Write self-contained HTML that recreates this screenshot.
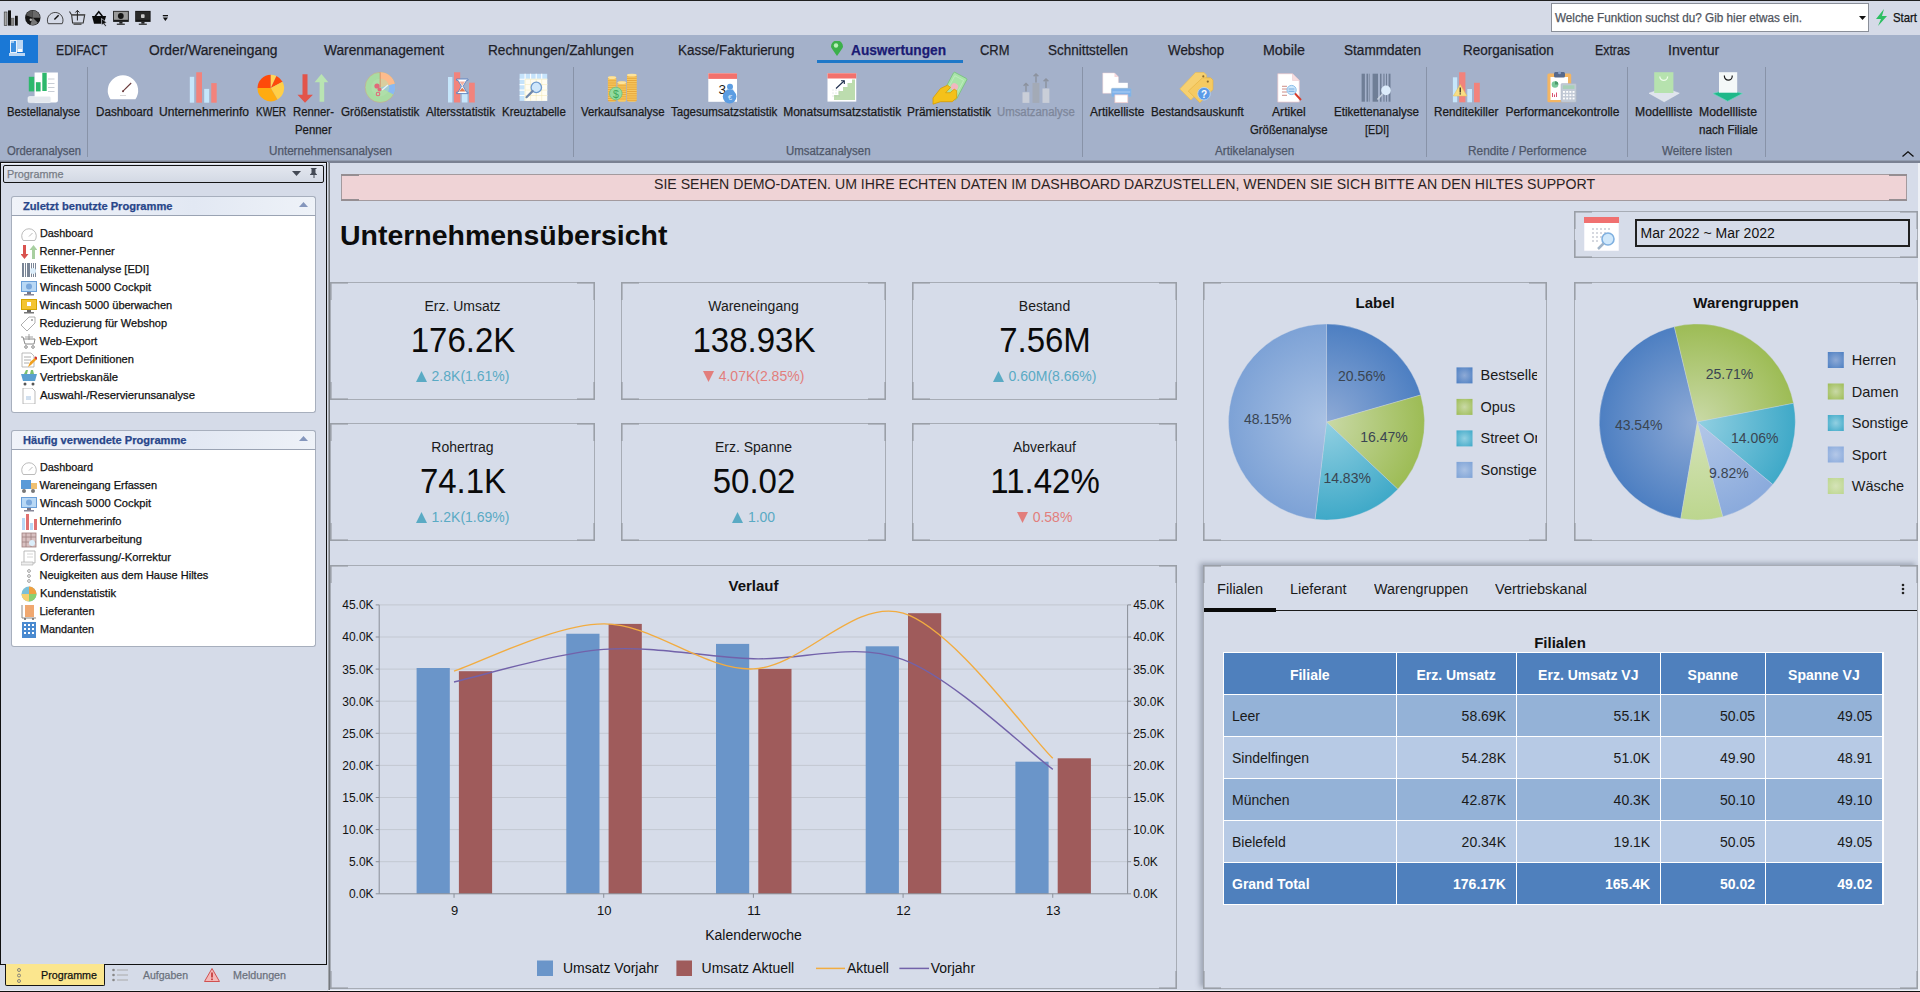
<!DOCTYPE html>
<html><head><meta charset="utf-8"><title>Dashboard</title>
<style>
html,body{margin:0;padding:0}
body{width:1920px;height:992px;position:relative;overflow:hidden;background:#d6dce9;font-family:'Liberation Sans',sans-serif}
.a{position:absolute;display:block}
.t{position:absolute;white-space:pre;display:block}
</style></head><body>
<div class="a" style="left:0px;top:0px;width:1920px;height:35px;background:#d5dae7"></div><div class="a" style="left:0px;top:0px;width:1920px;height:1px;background:#202020"></div><svg class="a" style="left:0;top:0" width="180" height="35" viewBox="0 0 180 35"><rect x="4.2" y="12" width="2.8" height="13.6" fill="#a8a8a8" stroke="#333" stroke-width=".6"/><rect x="8" y="10.4" width="3" height="15.2" fill="#111"/><rect x="11" y="18.1" width="3" height="7.5" fill="#888" stroke="#444" stroke-width=".4"/><rect x="15" y="15.8" width="2.8" height="9.8" fill="#111"/><circle cx="32.8" cy="17.7" r="7.7" fill="#141414"/><path d="M32.8 17.7L32.80 10.50A7.2 7.2 0 0 1 40.00 17.70z" fill="#6a6a6a"/><path d="M32.8 17.7L37.89 22.79A7.2 7.2 0 0 1 30.34 24.47z" fill="#777"/><path d="M32.8 17.7L26.03 15.24A7.2 7.2 0 0 1 32.80 10.50z" fill="#555"/><circle cx="30.8" cy="19.8" r="1.2" fill="#bbb"/><path d="M48.2 23.7A7.8 7.8 0 1 1 62.2 23.7z" fill="none" stroke="#333" stroke-width=".9"/><path d="M54.4 19.5L58.6 15.3" stroke="#111" stroke-width="1.4"/><path d="M69.5 11.5l2 3.2h13.2l-1.5 8.3H72.6l-1-8.3" fill="none" stroke="#333" stroke-width="1.1"/><path d="M71.6 14.9h13" stroke="#555" stroke-width="1.6"/><path d="M77.4 20.5V10.4M75.4 12.5l2-2.1 2 2.1" fill="none" stroke="#222" stroke-width="1"/><path d="M73.5 24.2h8" stroke="#444" stroke-width="1.3"/><path d="M92 16h14.1l-2.2 7.7H94z" fill="#0a0a0a"/><path d="M95.2 16.2l3.6-4.4 3.6 4.4" fill="none" stroke="#0a0a0a" stroke-width="1.5"/><path d="M101.5 18.5l5.5 4.3-2.3.4 1.7 2.6-1.3.7-1.6-2.6-1.8 1.4z" fill="#0a0a0a" stroke="#d5dae7" stroke-width=".7"/><rect x="113.1" y="10.9" width="15.7" height="11" fill="#1a1a1a"/><rect x="114" y="11.7" width="13.9" height="8.1" fill="#9a9a9a"/><circle cx="120.8" cy="16" r="2.9" fill="#151515"/><rect x="119.3" y="21.9" width="3.2" height="1.8" fill="#222"/><rect x="116.8" y="23.6" width="8" height="1.3" fill="#333"/><rect x="135.2" y="10.9" width="15.4" height="11" fill="#151515"/><rect x="136" y="11.7" width="13.8" height="8.1" fill="#2a2a2a"/><rect x="141" y="14.3" width="3.6" height="3.7" rx=".8" fill="#c8c8c8"/><rect x="141.3" y="21.9" width="3.2" height="1.8" fill="#222"/><rect x="138.8" y="23.6" width="8" height="1.3" fill="#333"/><rect x="162.8" y="15" width="5.2" height="1.3" fill="#111"/><path d="M162.8 17.4h5.2l-2.6 3.6z" fill="#111"/></svg><div class="a" style="left:1551px;top:3px;width:318px;height:29px;background:#fff;border:1px solid #8a8f99;box-sizing:border-box"></div><svg class="a" style="left:1859px;top:16px;" width="7" height="4" viewBox="0 0 7 4"><path d="M0 0h7L3.5 4z" fill="#111"/></svg><svg class="a" style="left:1875px;top:9px;" width="14" height="17" viewBox="0 0 14 17"><path d="M9 0L1 10h5l-3 7 9-10H7z" fill="#2dbf62"/></svg><div class="a" style="left:0px;top:35px;width:1920px;height:126px;background:#a4b1ca"></div><div class="a" style="left:0px;top:35px;width:38px;height:28px;background:#1a78d6"></div><svg class="a" style="left:9px;top:40px;" width="17" height="17" viewBox="0 0 17 17"><rect x="1" y="0" width="7" height="13" fill="#eaf2fb"/><rect x="2" y="1" width="5" height="11" fill="#3a8ee0"/><rect x="2" y="1.5" width="3" height="1" fill="#fff"/><rect x="8" y="0" width="6" height="12" fill="#bcd7f3"/><rect x="9" y="9" width="4" height="3" fill="#fff"/><rect x="0" y="13" width="16" height="3" fill="#bcd7f3"/></svg><svg class="a" style="left:831px;top:41px;" width="12" height="15" viewBox="0 0 12 15"><path d="M6 15C2 9 0 7 0 5.5a6 6 0 0 1 12 0C12 7 10 9 6 15z" fill="#3cb04a"/><circle cx="5" cy="4.5" r="2.2" fill="#b8f0b8"/></svg><div class="a" style="left:817px;top:60px;width:146px;height:3px;background:#1e78c8"></div><div class="a" style="left:0px;top:160px;width:1920px;height:1px;background:#939db0"></div><div class="a" style="left:0px;top:161px;width:1920px;height:2px;background:#7a8192"></div><div class="a" style="left:87px;top:67px;width:1px;height:90px;background:#8893a8"></div><div class="a" style="left:573px;top:67px;width:1px;height:90px;background:#8893a8"></div><div class="a" style="left:1082px;top:67px;width:1px;height:90px;background:#8893a8"></div><div class="a" style="left:1426px;top:67px;width:1px;height:90px;background:#8893a8"></div><div class="a" style="left:1627px;top:67px;width:1px;height:90px;background:#8893a8"></div><div class="a" style="left:1765px;top:67px;width:1px;height:90px;background:#8893a8"></div><svg class="a" style="left:0;top:63px" width="1920" height="100" viewBox="0 63 1920 100"><path d="M34.6 72.4H57.9V100.5Q57.9 102.6 55.8 102.6H34.6z" fill="#fff"/><path d="M48 79h6.5M48 83.5h6.5M48 87.5h6.5M48 91.5h6.5" stroke="#c9ced6" stroke-width="1"/><rect x="28" y="96.5" width="22.8" height="6.1" rx="1.5" fill="#e4e8ee" stroke="#f4f6f8" stroke-width=".6"/><rect x="28.8" y="76.8" width="5.40" height="14.60" fill="#2db86c"/><rect x="35.9" y="82.2" width="4.70" height="9.20" fill="#2db86c"/><rect x="42.3" y="72.8" width="4.40" height="18.20" fill="#2db86c"/><path d="M110.5 99.2A15.2 15.2 0 1 1 135.4 99.2z" fill="#fff"/><path d="M123 91.2L131.2 83" stroke="#6a3a3a" stroke-width="1.1"/><circle cx="123" cy="91.2" r="1" fill="#6a3a3a"/><rect x="120" y="95" width="6" height="1" fill="#d8d8d8"/><rect x="189.8" y="76.8" width="4.40" height="25.90" fill="#c6e6fb"/><rect x="196.25" y="72.25" width="5.75" height="30.45" fill="#f2837c"/><rect x="204.2" y="88.9" width="5.00" height="13.80" fill="#c6e6fb"/><rect x="211.25" y="83.1" width="5.45" height="19.60" fill="#f2837c"/><path d="M270.8 88.1L257.50 88.10A13.3 13.3 0 0 1 270.80 74.80z" fill="#fe4a0a"/><path d="M270.8 88.1L270.80 74.80A13.3 13.3 0 0 1 276.42 76.05z" fill="#ffd45a"/><path d="M270.8 88.1L276.42 76.05A13.3 13.3 0 0 1 282.54 81.86z" fill="#fe4a0a"/><path d="M270.8 88.1L282.54 81.86A13.3 13.3 0 0 1 277.45 99.62z" fill="#ffcf48"/><path d="M270.8 88.1L277.45 99.62A13.3 13.3 0 0 1 257.50 88.10z" fill="#ffab10"/><path d="M302.5 74.3h5v20.45h5.4l-7.9 7.95-7.5-7.95h5z" fill="#e2544a"/><path d="M319.6 101.8h4.6V82.25h4.1l-6.85-8.35-6.85 8.35h5z" fill="#b9e4b2"/><circle cx="380.2" cy="87.4" r="15.1" fill="#a9dca2" stroke="#d0a080" stroke-width=".5"/><path d="M380.2 87.4L380.20 72.30A15.1 15.1 0 0 1 394.85 83.75z" fill="#fdbb8c"/><path d="M380.2 87.4L394.85 83.75A15.1 15.1 0 0 1 393.53 94.49z" fill="#8ab8f2"/><circle cx="380.2" cy="87.4" r="9" fill="#b6e2b0" opacity=".5"/><path d="M380.2 72.3v15.1" stroke="#d88860" stroke-width=".8"/><circle cx="377" cy="86" r="2.6" fill="#e06a7a"/><circle cx="379.5" cy="89.5" r="2" fill="#e06a7a"/><circle cx="378" cy="94" r="1.8" fill="none" stroke="#e06a7a" stroke-width="1.1"/><path d="M382 90l6-5" stroke="#e8eef8" stroke-width="1.4"/><rect x="448" y="77" width="4.40" height="25.50" fill="#c6e6fb"/><rect x="454" y="72.25" width="6.20" height="30.25" fill="#f2837c"/><rect x="461.8" y="93.6" width="5.70" height="8.90" fill="#c6e6fb"/><rect x="469" y="82.7" width="5.80" height="19.80" fill="#f2837c"/><path d="M456.6 79h11.4v1.4h-1.4l-3.5 5.9 3.5 5.9h1.4v1.4h-11.4v-1.4h1.4l3.5-5.9-3.5-5.9h-1.4z" fill="#fff" stroke="#5a80c0" stroke-width=".9"/><path d="M459.5 81.5h5.6l-2.8 4.2z" fill="#f2b0a0"/><path d="M459 91.5h6.6l-3.3-3.8z" fill="#e07a50"/><rect x="519.6" y="73.8" width="27.6" height="27.1" fill="#c5e3fb"/><rect x="525" y="79.3" width="22.2" height="21.6" fill="#fffdf2"/><path d="M525.1 73.8V100.9M519.6 79.2H547.2" stroke="#ffffff" stroke-width="1.1"/><path d="M530.6 73.8V100.9M519.6 84.6H547.2" stroke="#ffffff" stroke-width="1.1"/><path d="M536.2 73.8V100.9M519.6 90.1H547.2" stroke="#ffffff" stroke-width="1.1"/><path d="M541.7 73.8V100.9M519.6 95.5H547.2" stroke="#ffffff" stroke-width="1.1"/><path d="M525.1 79.3V100.9M525 79.2H547.2" stroke="#f4e7b0" stroke-width=".6"/><path d="M530.6 79.3V100.9M525 84.6H547.2" stroke="#f4e7b0" stroke-width=".6"/><path d="M536.2 79.3V100.9M525 90.1H547.2" stroke="#f4e7b0" stroke-width=".6"/><path d="M541.7 79.3V100.9M525 95.5H547.2" stroke="#f4e7b0" stroke-width=".6"/><circle cx="536.3" cy="87.4" r="5.2" fill="#cfe7fb" stroke="#6f9cd0" stroke-width="1.3"/><path d="M532.6 91.1L526.5 97.2" stroke="#7088aa" stroke-width="2.2" stroke-linecap="round"/><rect x="607.9" y="76.4" width="8.35" height="25.40" rx="2" fill="#f8c860"/><path d="M607.9 78.6H616.25" stroke="#e09a2c" stroke-width=".7"/><path d="M607.9 80.8H616.25" stroke="#e09a2c" stroke-width=".7"/><path d="M607.9 83.0H616.25" stroke="#e09a2c" stroke-width=".7"/><path d="M607.9 85.2H616.25" stroke="#e09a2c" stroke-width=".7"/><path d="M607.9 87.4H616.25" stroke="#e09a2c" stroke-width=".7"/><path d="M607.9 89.6H616.25" stroke="#e09a2c" stroke-width=".7"/><path d="M607.9 91.8H616.25" stroke="#e09a2c" stroke-width=".7"/><path d="M607.9 94.0H616.25" stroke="#e09a2c" stroke-width=".7"/><path d="M607.9 96.2H616.25" stroke="#e09a2c" stroke-width=".7"/><path d="M607.9 98.4H616.25" stroke="#e09a2c" stroke-width=".7"/><path d="M607.9 100.6H616.25" stroke="#e09a2c" stroke-width=".7"/><ellipse cx="612.08" cy="77.70" rx="4.18" ry="1.4" fill="#fde39a"/><rect x="617.5" y="81.4" width="8.75" height="20.40" rx="2" fill="#f8c860"/><path d="M617.5 83.6H626.25" stroke="#e09a2c" stroke-width=".7"/><path d="M617.5 85.8H626.25" stroke="#e09a2c" stroke-width=".7"/><path d="M617.5 88.0H626.25" stroke="#e09a2c" stroke-width=".7"/><path d="M617.5 90.2H626.25" stroke="#e09a2c" stroke-width=".7"/><path d="M617.5 92.4H626.25" stroke="#e09a2c" stroke-width=".7"/><path d="M617.5 94.6H626.25" stroke="#e09a2c" stroke-width=".7"/><path d="M617.5 96.8H626.25" stroke="#e09a2c" stroke-width=".7"/><path d="M617.5 99.0H626.25" stroke="#e09a2c" stroke-width=".7"/><ellipse cx="621.88" cy="82.70" rx="4.38" ry="1.4" fill="#fde39a"/><rect x="627" y="73.9" width="9.70" height="27.90" rx="2" fill="#f8c860"/><path d="M627 76.1H636.7" stroke="#e09a2c" stroke-width=".7"/><path d="M627 78.3H636.7" stroke="#e09a2c" stroke-width=".7"/><path d="M627 80.5H636.7" stroke="#e09a2c" stroke-width=".7"/><path d="M627 82.7H636.7" stroke="#e09a2c" stroke-width=".7"/><path d="M627 84.9H636.7" stroke="#e09a2c" stroke-width=".7"/><path d="M627 87.1H636.7" stroke="#e09a2c" stroke-width=".7"/><path d="M627 89.3H636.7" stroke="#e09a2c" stroke-width=".7"/><path d="M627 91.5H636.7" stroke="#e09a2c" stroke-width=".7"/><path d="M627 93.7H636.7" stroke="#e09a2c" stroke-width=".7"/><path d="M627 95.9H636.7" stroke="#e09a2c" stroke-width=".7"/><path d="M627 98.1H636.7" stroke="#e09a2c" stroke-width=".7"/><path d="M627 100.3H636.7" stroke="#e09a2c" stroke-width=".7"/><ellipse cx="631.85" cy="75.20" rx="4.85" ry="1.4" fill="#fde39a"/><circle cx="615.8" cy="93.5" r="6.3" fill="#93dca0" stroke="#6cc080" stroke-width=".8"/><text x="615.8" y="97.6" font-size="10.5" text-anchor="middle" fill="#3ea85a" font-family="Liberation Sans">$</text><rect x="708.3" y="73.3" width="28.7" height="28.5" fill="#fff"/><rect x="708.3" y="73.3" width="28.7" height="5.6" fill="#f2716c"/><text x="722.2" y="94.3" font-size="13.5" text-anchor="middle" fill="#1a1a1a" font-family="Liberation Sans">3</text><circle cx="729.6" cy="96.6" r="6.8" fill="#5c9de2"/><circle cx="730" cy="86.8" r="3" fill="#5c9de2"/><path d="M727 89.5h6l1.2 2.5h-8.4z" fill="#5c9de2"/><text x="730" y="99.6" font-size="7.5" text-anchor="middle" fill="#d8e8fa" font-family="Liberation Sans">€</text><rect x="827.5" y="73.25" width="28.75" height="28.35" fill="#fff"/><rect x="827.5" y="73.25" width="28.75" height="5.25" fill="#f2716c"/><path d="M834 100V95h4.5v-4h4.5v-4h4.5v-4h4.5v-3.5h3v20.5z" fill="#bcdcae"/><circle cx="833" cy="90" r=".45" fill="#9aa"/><circle cx="833" cy="93" r=".45" fill="#9aa"/><circle cx="833" cy="96" r=".45" fill="#9aa"/><circle cx="836" cy="90" r=".45" fill="#9aa"/><circle cx="836" cy="93" r=".45" fill="#9aa"/><circle cx="836" cy="96" r=".45" fill="#9aa"/><circle cx="839" cy="90" r=".45" fill="#9aa"/><circle cx="839" cy="93" r=".45" fill="#9aa"/><circle cx="839" cy="96" r=".45" fill="#9aa"/><path d="M836 88.5L844 81" stroke="#1c2c4c" stroke-width="1.1"/><path d="M841 80.8h3.3v3.3" fill="none" stroke="#1c2c4c" stroke-width="1.1"/><g transform="rotate(28 955 86)"><rect x="947.5" y="74" width="15" height="24" rx="1" fill="#a8e4a8" stroke="#78c080" stroke-width=".8"/><circle cx="955" cy="87" r="3.6" fill="#f0b8c0"/><rect x="950" y="77" width="10" height="18" fill="none" stroke="#c8f0c8" stroke-width=".6"/></g><path d="M933 98l7.5-9.5 7-3.3 3 2.2-4.8 5.3h4.5l4-3.5 2.5 1.5v7.2l-4.5 3.8H940.5l-7.5 2.5z" fill="#f4c11a" stroke="#d89c00" stroke-width=".8"/><rect x="1022.5" y="92.25" width="6.90" height="10.65" fill="#c9ced8"/><rect x="1032.5" y="82.9" width="6.90" height="20.00" fill="#a3aab6"/><rect x="1042.5" y="88.5" width="6.90" height="14.40" fill="#c9ced8"/><g stroke="#8c929e" stroke-width="1.4" fill="none"><path d="M1026 91.5V83.5M1023.6 85.8l2.4-2.4 2.4 2.4M1036 82.5V74M1033.6 76.3l2.4-2.4 2.4 2.4M1046 88V79M1043.6 81.3l2.4-2.4 2.4 2.4"/></g><path d="M1102.8 73H1114.5L1118.4 76.9V93.3H1102.8z" fill="#fff" stroke="#f0d0d4" stroke-width=".5"/><path d="M1114.5 73v3.9h3.9" fill="#f6d6da"/><rect x="1114.9" y="82.8" width="12.9" height="6" fill="#fff"/><rect x="1111.4" y="88.3" width="19.9" height="8.6" rx="1.2" fill="#7fb2ea" stroke="#9cb8d0" stroke-width=".6"/><rect x="1112.5" y="91.4" width="17.7" height="1.2" fill="#a6caf2"/><rect x="1114.9" y="94.9" width="12.9" height="7.8" fill="#fff" stroke="#f0c8c8" stroke-width=".7"/><path d="M1198 72.8h8.5l2.5 2.5v9.2l-15.7 15.7-11-11z" fill="#f6d070" stroke="#e9bc50" stroke-width=".6" transform="translate(-2.5 -0.3)"/><path d="M1202.5 77.8h8.3l2.2 2.2v9.6l-13.1 13.1-11.6-11.6z" fill="#f5ca62" stroke="#e2b040" stroke-width=".6"/><circle cx="1203.3" cy="76.3" r="1.1" fill="#8a6a30"/><circle cx="1207.8" cy="81.6" r="1.1" fill="#8a6a30"/><circle cx="1204" cy="93.7" r="6.3" fill="#5b9be8" stroke="#b8d4f4" stroke-width=".9"/><text x="1204" y="97.5" font-size="10" text-anchor="middle" fill="#fff" font-weight="bold" font-family="Liberation Sans">?</text><path d="M1277.8 73.7H1292.5L1299.3 80.5V102.1H1277.8z" fill="#fff" stroke="#e8c4c8" stroke-width=".7"/><path d="M1292.5 73.7v6.8h6.8" fill="#f7dde0" stroke="#e8c4c8" stroke-width=".5"/><path d="M1282 86.3h5M1282 89h5M1282 92h5M1282 95.3h5" stroke="#c07068" stroke-width=".8"/><circle cx="1291.6" cy="90" r="4.6" fill="#cfe8fb" stroke="#7fb8e8" stroke-width=".9"/><path d="M1288.5 89h6M1288.5 91.3h6" stroke="#5a9ad8" stroke-width=".8"/><path d="M1295 93.5L1301 100" stroke="#d83a2a" stroke-width="1.9"/><rect x="1361.6" y="73.7" width="3.30" height="28.00" fill="#6f7e96"/><rect x="1366.5" y="73.7" width="1.70" height="28.00" fill="#6f7e96"/><rect x="1369.2" y="73.7" width="0.80" height="28.00" fill="#7f8da2"/><rect x="1372.6" y="73.7" width="5.40" height="28.00" fill="#6f7e96"/><rect x="1380" y="73.7" width="1.50" height="28.00" fill="#6f7e96"/><rect x="1383.4" y="73.7" width="1.10" height="28.00" fill="#6f7e96"/><rect x="1386" y="73.7" width="1.00" height="28.00" fill="#6f7e96"/><rect x="1388.6" y="73.7" width="1.90" height="28.00" fill="#6f7e96"/><path d="M1382.5 94L1377.5 99.5" stroke="#c8d2de" stroke-width="1.6"/><circle cx="1386" cy="90.4" r="4.8" fill="#dcecfb"/><rect x="1452.9" y="77.3" width="4.30" height="25.00" fill="#c6e6fb"/><rect x="1459.1" y="72.25" width="6.30" height="30.05" fill="#f2837c"/><rect x="1467.3" y="89" width="4.70" height="13.30" fill="#c6e6fb"/><rect x="1474" y="82.8" width="5.80" height="19.50" fill="#f2837c"/><path d="M1460.2 84.4L1467 96H1453.3z" fill="#f8de84" stroke="#e8c050" stroke-width=".5"/><rect x="1459.6" y="87.5" width="1.2" height="5" fill="#222"/><rect x="1459.6" y="93.3" width="1.2" height="1.2" fill="#222"/><rect x="1547.4" y="73.5" width="23.8" height="28.8" rx="1.5" fill="#f3b563"/><rect x="1550.5" y="77" width="17.5" height="23" fill="#fff"/><rect x="1554" y="72" width="11" height="5.5" rx="1.5" fill="#56698c"/><circle cx="1559.5" cy="72.8" r="1.5" fill="#8aa0c8"/><circle cx="1555" cy="84.5" r="3.3" fill="#7ac89a"/><path d="M1555 84.5V81.2A3.3 3.3 0 0 1 1558.3 84.5z" fill="#4a9a6a"/><path d="M1552.5 97v-4M1554.5 97v-2.5M1556.5 97v-4.5" stroke="#d85070" stroke-width="1"/><rect x="1561" y="83.6" width="15.3" height="18.7" rx="1" fill="#c2cad6" stroke="#a8b2c0" stroke-width=".5"/><rect x="1562.8" y="85.3" width="11.7" height="3.6" fill="#a8d0b8"/><rect x="1563.0" y="91.0" width="1.9" height="1.8" fill="#fff"/><rect x="1563.0" y="94.3" width="1.9" height="1.8" fill="#fff"/><rect x="1563.0" y="97.6" width="1.9" height="1.8" fill="#fff"/><rect x="1566.2" y="91.0" width="1.9" height="1.8" fill="#fff"/><rect x="1566.2" y="94.3" width="1.9" height="1.8" fill="#fff"/><rect x="1566.2" y="97.6" width="1.9" height="1.8" fill="#fff"/><rect x="1569.4" y="91.0" width="1.9" height="1.8" fill="#fff"/><rect x="1569.4" y="94.3" width="1.9" height="1.8" fill="#fff"/><rect x="1569.4" y="97.6" width="1.9" height="1.8" fill="#fff"/><rect x="1572.6" y="91.0" width="1.9" height="1.8" fill="#fff"/><rect x="1572.6" y="94.3" width="1.9" height="1.8" fill="#fff"/><rect x="1572.6" y="97.6" width="1.9" height="1.8" fill="#fff"/><path d="M1649 93.2L1664.2 88 1679.3 93.2 1664.2 101.8z" fill="#dfe4ec" stroke="#eef2f6" stroke-width=".5"/><rect x="1654.2" y="72.2" width="19.2" height="20.8" fill="#b6e2ae"/><path d="M1659.8 76.5a3.9 3.9 0 0 0 7.8 0" fill="none" stroke="#eefbea" stroke-width="1.3"/><path d="M1713 93.5L1727.7 89.4 1742.4 93.5 1727.7 101.2z" fill="#1fb889" stroke="#6ad8c0" stroke-width=".7"/><rect x="1719" y="72.2" width="18.2" height="20.5" fill="#f4f8f8"/><path d="M1724.4 76.2a3.9 3.9 0 0 0 7.8 0V75.6M1724.4 76.2V75.6" fill="none" stroke="#1a1a1a" stroke-width="1.2"/></svg><svg class="a" style="left:1902px;top:151px;" width="12" height="6" viewBox="0 0 12 6"><path d="M0.5 5.5L6 0.8l5.5 4.7" fill="none" stroke="#111" stroke-width="1.3"/></svg><div class="a" style="left:0px;top:162px;width:328px;height:829px;background:#d5dbe8"></div><div class="a" style="left:0px;top:162px;width:327px;height:1px;background:#101010"></div><div class="a" style="left:0px;top:162px;width:1px;height:803px;background:#101010"></div><div class="a" style="left:326px;top:162px;width:1px;height:803px;background:#101010"></div><div class="a" style="left:0px;top:964px;width:327px;height:1px;background:#101010"></div><div class="a" style="left:1px;top:163px;width:325px;height:1px;background:#f2f4f8"></div><div class="a" style="left:3px;top:165px;width:321px;height:18px;background:linear-gradient(#e3e7ef,#d3d9e4);border:1px solid #151515;border-radius:2px;box-sizing:border-box"></div><svg class="a" style="left:292px;top:171px;" width="9" height="5" viewBox="0 0 9 5"><path d="M0 0h9L4.5 5z" fill="#444a55"/></svg><svg class="a" style="left:310px;top:168px;" width="8" height="10" viewBox="0 0 8 10"><path d="M1.5 0h5v1h-1v4l1.5 1.5V7H0V6.5L1.5 5V1h-1z" fill="#444a55"/><rect x="3.5" y="7" width="1" height="3" fill="#444a55"/></svg><div class="a" style="left:11px;top:196px;width:305px;height:20px;background:linear-gradient(90deg,#f0f3f9,#e2e8f3 60%,#eef2f8);border:1px solid #a7afbd;border-bottom:1px solid #9aa3b3;border-radius:3px 3px 0 0;box-sizing:border-box"></div><svg class="a" style="left:299px;top:202px;" width="9" height="5" viewBox="0 0 9 5"><path d="M0 5L4.5 0 9 5z" fill="#8496bc"/></svg><div class="a" style="left:11px;top:216px;width:305px;height:197px;background:#fff;border:1px solid #a7afbd;border-top:none;border-radius:0 0 3px 3px;box-sizing:border-box"></div><svg class="a" style="left:21px;top:226.3px;" width="16" height="16" viewBox="0 0 16 16"><path d="M2.2 14.5A7.3 7.3 0 1 1 13.8 14.5z" fill="#fff" stroke="#aaa" stroke-width=".8"/><path d="M8 10.5l3.5-3.5" stroke="#bbb" stroke-width="1"/></svg><svg class="a" style="left:21px;top:244.3px;" width="16" height="16" viewBox="0 0 16 16"><path d="M2 1h3v9h2.5L3.5 15 -.5 10H2z" fill="#d9534f"/><path d="M11 15h3V6h2.5L12.5 1 8.5 6H11z" fill="#a8cfa0"/></svg><svg class="a" style="left:21px;top:262.3px;" width="16" height="16" viewBox="0 0 16 16"><g fill="#7a8596"><rect x="1" y="1" width="2" height="14"/><rect x="4" y="1" width="1" height="14"/><rect x="6" y="1" width="3" height="14"/><rect x="10" y="1" width="1" height="14"/><rect x="12" y="1" width="1" height="14"/><rect x="14" y="1" width="1" height="14"/></g><circle cx="12" cy="9" r="3" fill="#dceefb"/></svg><svg class="a" style="left:21px;top:280.3px;" width="16" height="16" viewBox="0 0 16 16"><rect x="0" y="1" width="16" height="11" fill="#6a9fd8"/><rect x="1" y="2" width="14" height="9" fill="#b8d8f5"/><circle cx="8" cy="6.5" r="3" fill="#7aa8dc"/><rect x="6" y="12" width="4" height="2" fill="#778"/><rect x="3" y="14" width="10" height="1.5" fill="#889"/></svg><svg class="a" style="left:21px;top:298.3px;" width="16" height="16" viewBox="0 0 16 16"><rect x="0" y="1" width="16" height="11" fill="#d4a400"/><rect x="1" y="2" width="14" height="9" fill="#f4c430"/><rect x="6" y="4" width="4" height="4" fill="#fff"/><rect x="6" y="12" width="4" height="2" fill="#666"/><rect x="3" y="14" width="10" height="1.5" fill="#777"/></svg><svg class="a" style="left:21px;top:316.3px;" width="16" height="16" viewBox="0 0 16 16"><path d="M8 1h6v6l-8 8-6-6z" fill="#fff" stroke="#999" stroke-width=".8"/><circle cx="11" cy="4" r="1" fill="#999"/></svg><svg class="a" style="left:21px;top:334.3px;" width="16" height="16" viewBox="0 0 16 16"><path d="M0 3h2l2 7h9l1-5H3" fill="none" stroke="#888" stroke-width="1"/><path d="M8 0v6M4 3h8" stroke="#888" stroke-width=".8"/><circle cx="5" cy="13" r="1.3" fill="none" stroke="#888"/><circle cx="12" cy="13" r="1.3" fill="none" stroke="#888"/></svg><svg class="a" style="left:21px;top:352.3px;" width="16" height="16" viewBox="0 0 16 16"><path d="M1 1h9l3 3v11H1z" fill="#fff" stroke="#aaa" stroke-width=".8"/><path d="M3 5h7M3 8h7M3 11h5" stroke="#999" stroke-width=".8"/><path d="M7 15l2-5 6-5 1 2-6 6z" fill="#f0a020"/><path d="M14 5l2 2" stroke="#d03030" stroke-width="2"/></svg><svg class="a" style="left:21px;top:370.3px;" width="16" height="16" viewBox="0 0 16 16"><path d="M0 4h16l-2 7H2z" fill="#5aa0d0"/><path d="M3 4l2-4h2l-1 4M9 4l1-4h2l1 4" fill="#7cc070"/><circle cx="4" cy="14" r="1.5" fill="#555"/><circle cx="12" cy="14" r="1.5" fill="#555"/></svg><svg class="a" style="left:21px;top:388.3px;" width="16" height="16" viewBox="0 0 16 16"><path d="M2 0h9l3 3v13H2z" fill="#fff" stroke="#aaa" stroke-width=".8"/><path d="M5 9h5M5 11h5" stroke="#8ab0d8" stroke-width=".8"/></svg><div class="a" style="left:11px;top:430px;width:305px;height:20px;background:linear-gradient(90deg,#f0f3f9,#e2e8f3 60%,#eef2f8);border:1px solid #a7afbd;border-bottom:1px solid #9aa3b3;border-radius:3px 3px 0 0;box-sizing:border-box"></div><svg class="a" style="left:299px;top:436px;" width="9" height="5" viewBox="0 0 9 5"><path d="M0 5L4.5 0 9 5z" fill="#8496bc"/></svg><div class="a" style="left:11px;top:450px;width:305px;height:197px;background:#fff;border:1px solid #a7afbd;border-top:none;border-radius:0 0 3px 3px;box-sizing:border-box"></div><svg class="a" style="left:21px;top:460.3px;" width="16" height="16" viewBox="0 0 16 16"><path d="M2.2 14.5A7.3 7.3 0 1 1 13.8 14.5z" fill="#fff" stroke="#aaa" stroke-width=".8"/><path d="M8 10.5l3.5-3.5" stroke="#bbb" stroke-width="1"/></svg><svg class="a" style="left:21px;top:478.3px;" width="16" height="16" viewBox="0 0 16 16"><rect x="0" y="2" width="10" height="9" fill="#5a9ad8"/><rect x="10" y="5" width="6" height="6" fill="#f0c070"/><circle cx="3" cy="13" r="2" fill="#777"/><circle cx="12" cy="13" r="2" fill="#777"/></svg><svg class="a" style="left:21px;top:496.3px;" width="16" height="16" viewBox="0 0 16 16"><rect x="0" y="1" width="16" height="11" fill="#6a9fd8"/><rect x="1" y="2" width="14" height="9" fill="#b8d8f5"/><circle cx="8" cy="6.5" r="3" fill="#7aa8dc"/><rect x="6" y="12" width="4" height="2" fill="#778"/><rect x="3" y="14" width="10" height="1.5" fill="#889"/></svg><svg class="a" style="left:21px;top:514.3px;" width="16" height="16" viewBox="0 0 16 16"><rect x="1" y="4" width="3" height="12" fill="#b8d8f5"/><rect x="5" y="0" width="3" height="16" fill="#e07070"/><rect x="9" y="9" width="3" height="7" fill="#b8d8f5"/><rect x="13" y="5" width="3" height="11" fill="#e07070"/></svg><svg class="a" style="left:21px;top:532.3px;" width="16" height="16" viewBox="0 0 16 16"><rect x="1" y="1" width="14" height="14" fill="#d8c0c0" stroke="#a08080" stroke-width=".8"/><path d="M5 1v14M10 1v14M1 5h14M1 10h14" stroke="#a08080" stroke-width=".8"/><circle cx="11" cy="11" r="3" fill="#dceefb"/></svg><svg class="a" style="left:21px;top:550.3px;" width="16" height="16" viewBox="0 0 16 16"><path d="M3 1h11v12H3z" fill="#fff" stroke="#aaa" stroke-width=".8"/><path d="M0 12h12v3H0z" fill="#eee" stroke="#aaa" stroke-width=".6"/><path d="M6 4h6M6 7h6" stroke="#ccc" stroke-width=".8"/></svg><svg class="a" style="left:21px;top:568.3px;" width="16" height="16" viewBox="0 0 16 16"><circle cx="8" cy="3" r="1.4" fill="none" stroke="#888" stroke-width=".8"/><circle cx="8" cy="8" r="1.4" fill="none" stroke="#888" stroke-width=".8"/><circle cx="8" cy="13" r="1.4" fill="none" stroke="#888" stroke-width=".8"/></svg><svg class="a" style="left:21px;top:586.3px;" width="16" height="16" viewBox="0 0 16 16"><circle cx="8" cy="8" r="7.5" fill="#7ac0d8"/><path d="M8 8V0.5A7.5 7.5 0 0 1 15.5 8z" fill="#f0a040"/><path d="M8 8L15.5 8A7.5 7.5 0 0 1 8 15.5z" fill="#8ad070"/><path d="M8 8L8 15.5A7.5 7.5 0 0 1 .5 8z" fill="#f5d070"/></svg><svg class="a" style="left:21px;top:604.3px;" width="16" height="16" viewBox="0 0 16 16"><rect x="4" y="1" width="9" height="12" fill="#f0a870"/><path d="M1 1v13h14" fill="none" stroke="#888" stroke-width="1"/><circle cx="4" cy="15" r="1" fill="#666"/><circle cx="12" cy="15" r="1" fill="#666"/></svg><svg class="a" style="left:21px;top:622.3px;" width="16" height="16" viewBox="0 0 16 16"><rect x="1" y="0" width="14" height="16" fill="#4a8ad0"/><g fill="#fff"><rect x="3" y="2" width="2" height="2"/><rect x="7" y="2" width="2" height="2"/><rect x="11" y="2" width="2" height="2"/><rect x="3" y="6" width="2" height="2"/><rect x="7" y="6" width="2" height="2"/><rect x="11" y="6" width="2" height="2"/><rect x="3" y="10" width="2" height="2"/><rect x="7" y="10" width="2" height="2"/><rect x="11" y="10" width="2" height="2"/></g></svg><div class="a" style="left:1px;top:965px;width:326px;height:26px;background:#d5dbe8"></div><div class="a" style="left:5px;top:964px;width:100px;height:22px;background:#fbe68e;border:1px solid #151515;border-top:none;border-radius:0 0 2px 2px;box-sizing:border-box"></div><svg class="a" style="left:16px;top:968px;" width="6" height="15" viewBox="0 0 6 15"><circle cx="3" cy="2" r="1.5" fill="none" stroke="#777" stroke-width=".9"/><circle cx="3" cy="7.5" r="1.5" fill="none" stroke="#777" stroke-width=".9"/><circle cx="3" cy="13" r="1.5" fill="none" stroke="#777" stroke-width=".9"/></svg><svg class="a" style="left:112px;top:968px;" width="17" height="14" viewBox="0 0 17 14"><g fill="#888"><circle cx="1.5" cy="2" r="1.3"/><circle cx="1.5" cy="7" r="1.3"/><circle cx="1.5" cy="12" r="1.3"/></g><path d="M5 2h11M5 7h11M5 12h11" stroke="#aaa" stroke-width="1"/></svg><svg class="a" style="left:204px;top:968px;" width="16" height="14" viewBox="0 0 16 14"><path d="M8 0.5L15.5 13.5H.5z" fill="#f4b8b8" stroke="#d05050" stroke-width="1"/><rect x="7.2" y="4.5" width="1.6" height="5" fill="#c03030"/><rect x="7.2" y="10.5" width="1.6" height="1.6" fill="#c03030"/></svg><div class="a" style="left:0px;top:990px;width:1920px;height:1px;background:#e8ebf2"></div><div class="a" style="left:0px;top:991px;width:1920px;height:1px;background:#101010"></div><div class="a" style="left:327px;top:163px;width:1593px;height:828px;background:#d6dce9"></div><div class="a" style="left:327px;top:163px;width:1px;height:827px;background:#d5dbe8"></div><div class="a" style="left:328px;top:163px;width:1px;height:827px;background:#a0a4aa"></div><div class="a" style="left:329px;top:163px;width:1px;height:827px;background:#75797f"></div><div class="a" style="left:1918px;top:163px;width:2px;height:828px;background:#eef1f6"></div><div class="a" style="left:328px;top:990px;width:1592px;height:1px;background:#f4f6f9"></div><div class="a" style="left:341px;top:174px;width:1566px;height:27px;background:#efd3d6;border:1px solid #a39a9e;box-sizing:border-box"></div><div class="a" style="left:341px;top:174px;width:18px;height:2px;background:#958e92"></div><div class="a" style="left:1889px;top:174px;width:18px;height:2px;background:#958e92"></div><div class="a" style="left:341px;top:199px;width:18px;height:2px;background:#958e92"></div><div class="a" style="left:1889px;top:199px;width:18px;height:2px;background:#958e92"></div><div class="a" style="left:1574px;top:211px;width:344px;height:47px;border:1px solid #a7acb5;box-sizing:border-box;"></div><div class="a" style="left:1574px;top:211px;width:18px;height:1px;background:#9a9fa7"></div><div class="a" style="left:1574px;top:212px;width:18px;height:1px;background:#9a9fa7;opacity:.6"></div><div class="a" style="left:1574px;top:211px;width:1px;height:18px;background:#9a9fa7"></div><div class="a" style="left:1575px;top:211px;width:1px;height:18px;background:#9a9fa7;opacity:.6"></div><div class="a" style="left:1900px;top:211px;width:18px;height:1px;background:#9a9fa7"></div><div class="a" style="left:1900px;top:212px;width:18px;height:1px;background:#9a9fa7;opacity:.6"></div><div class="a" style="left:1917px;top:211px;width:1px;height:18px;background:#9a9fa7"></div><div class="a" style="left:1916px;top:211px;width:1px;height:18px;background:#9a9fa7;opacity:.6"></div><div class="a" style="left:1574px;top:257px;width:18px;height:1px;background:#9a9fa7"></div><div class="a" style="left:1574px;top:256px;width:18px;height:1px;background:#9a9fa7;opacity:.6"></div><div class="a" style="left:1574px;top:240px;width:1px;height:18px;background:#9a9fa7"></div><div class="a" style="left:1575px;top:240px;width:1px;height:18px;background:#9a9fa7;opacity:.6"></div><div class="a" style="left:1900px;top:257px;width:18px;height:1px;background:#9a9fa7"></div><div class="a" style="left:1900px;top:256px;width:18px;height:1px;background:#9a9fa7;opacity:.6"></div><div class="a" style="left:1917px;top:240px;width:1px;height:18px;background:#9a9fa7"></div><div class="a" style="left:1916px;top:240px;width:1px;height:18px;background:#9a9fa7;opacity:.6"></div><svg class="a" style="left:1584px;top:217px;" width="35" height="34" viewBox="0 0 35 34"><rect x="0" y="0" width="35" height="34" fill="#fff" stroke="#dde" stroke-width=".6"/><rect x="0" y="0" width="35" height="6" fill="#f07070"/><g fill="#c8ccd6"><circle cx="9" cy="12" r="1"/><circle cx="13" cy="12" r="1"/><circle cx="17" cy="12" r="1"/><circle cx="21" cy="12" r="1"/><circle cx="25" cy="12" r="1"/><circle cx="9" cy="16" r="1"/><circle cx="13" cy="16" r="1"/><circle cx="17" cy="16" r="1"/><circle cx="21" cy="16" r="1"/><circle cx="9" cy="20" r="1"/><circle cx="13" cy="20" r="1"/><circle cx="17" cy="20" r="1"/><circle cx="9" cy="24" r="1"/><circle cx="13" cy="24" r="1"/></g><circle cx="24" cy="22" r="6" fill="#d0e8fb" stroke="#7fb0e0" stroke-width="1.6"/><path d="M19.5 26.5L14 32" stroke="#a0b4c8" stroke-width="2.5"/></svg><div class="a" style="left:1635px;top:219px;width:275px;height:28px;border:2px solid #202020;box-sizing:border-box"></div><div class="a" style="left:330px;top:282px;width:265px;height:118px;border:1px solid #a7acb5;box-sizing:border-box;"></div><div class="a" style="left:330px;top:282px;width:18px;height:1px;background:#9a9fa7"></div><div class="a" style="left:330px;top:283px;width:18px;height:1px;background:#9a9fa7;opacity:.6"></div><div class="a" style="left:330px;top:282px;width:1px;height:18px;background:#9a9fa7"></div><div class="a" style="left:331px;top:282px;width:1px;height:18px;background:#9a9fa7;opacity:.6"></div><div class="a" style="left:577px;top:282px;width:18px;height:1px;background:#9a9fa7"></div><div class="a" style="left:577px;top:283px;width:18px;height:1px;background:#9a9fa7;opacity:.6"></div><div class="a" style="left:594px;top:282px;width:1px;height:18px;background:#9a9fa7"></div><div class="a" style="left:593px;top:282px;width:1px;height:18px;background:#9a9fa7;opacity:.6"></div><div class="a" style="left:330px;top:399px;width:18px;height:1px;background:#9a9fa7"></div><div class="a" style="left:330px;top:398px;width:18px;height:1px;background:#9a9fa7;opacity:.6"></div><div class="a" style="left:330px;top:382px;width:1px;height:18px;background:#9a9fa7"></div><div class="a" style="left:331px;top:382px;width:1px;height:18px;background:#9a9fa7;opacity:.6"></div><div class="a" style="left:577px;top:399px;width:18px;height:1px;background:#9a9fa7"></div><div class="a" style="left:577px;top:398px;width:18px;height:1px;background:#9a9fa7;opacity:.6"></div><div class="a" style="left:594px;top:382px;width:1px;height:18px;background:#9a9fa7"></div><div class="a" style="left:593px;top:382px;width:1px;height:18px;background:#9a9fa7;opacity:.6"></div><div class="a" style="left:330px;width:265px;top:369.15px;height:14px;line-height:14px;font-size:14px;text-align:center;color:#5aaac4;white-space:pre"><svg width="11" height="11" viewBox="0 0 11 11" style="vertical-align:-1px;margin-right:5px"><path d="M0 11L5.5 0 11 11z" fill="#5aaac4"/></svg>2.8K(1.61%)</div><div class="a" style="left:621px;top:282px;width:265px;height:118px;border:1px solid #a7acb5;box-sizing:border-box;"></div><div class="a" style="left:621px;top:282px;width:18px;height:1px;background:#9a9fa7"></div><div class="a" style="left:621px;top:283px;width:18px;height:1px;background:#9a9fa7;opacity:.6"></div><div class="a" style="left:621px;top:282px;width:1px;height:18px;background:#9a9fa7"></div><div class="a" style="left:622px;top:282px;width:1px;height:18px;background:#9a9fa7;opacity:.6"></div><div class="a" style="left:868px;top:282px;width:18px;height:1px;background:#9a9fa7"></div><div class="a" style="left:868px;top:283px;width:18px;height:1px;background:#9a9fa7;opacity:.6"></div><div class="a" style="left:885px;top:282px;width:1px;height:18px;background:#9a9fa7"></div><div class="a" style="left:884px;top:282px;width:1px;height:18px;background:#9a9fa7;opacity:.6"></div><div class="a" style="left:621px;top:399px;width:18px;height:1px;background:#9a9fa7"></div><div class="a" style="left:621px;top:398px;width:18px;height:1px;background:#9a9fa7;opacity:.6"></div><div class="a" style="left:621px;top:382px;width:1px;height:18px;background:#9a9fa7"></div><div class="a" style="left:622px;top:382px;width:1px;height:18px;background:#9a9fa7;opacity:.6"></div><div class="a" style="left:868px;top:399px;width:18px;height:1px;background:#9a9fa7"></div><div class="a" style="left:868px;top:398px;width:18px;height:1px;background:#9a9fa7;opacity:.6"></div><div class="a" style="left:885px;top:382px;width:1px;height:18px;background:#9a9fa7"></div><div class="a" style="left:884px;top:382px;width:1px;height:18px;background:#9a9fa7;opacity:.6"></div><div class="a" style="left:621px;width:265px;top:369.15px;height:14px;line-height:14px;font-size:14px;text-align:center;color:#e27e7c;white-space:pre"><svg width="11" height="11" viewBox="0 0 11 11" style="vertical-align:-1px;margin-right:5px"><path d="M0 0h11L5.5 11z" fill="#e27e7c"/></svg>4.07K(2.85%)</div><div class="a" style="left:912px;top:282px;width:265px;height:118px;border:1px solid #a7acb5;box-sizing:border-box;"></div><div class="a" style="left:912px;top:282px;width:18px;height:1px;background:#9a9fa7"></div><div class="a" style="left:912px;top:283px;width:18px;height:1px;background:#9a9fa7;opacity:.6"></div><div class="a" style="left:912px;top:282px;width:1px;height:18px;background:#9a9fa7"></div><div class="a" style="left:913px;top:282px;width:1px;height:18px;background:#9a9fa7;opacity:.6"></div><div class="a" style="left:1159px;top:282px;width:18px;height:1px;background:#9a9fa7"></div><div class="a" style="left:1159px;top:283px;width:18px;height:1px;background:#9a9fa7;opacity:.6"></div><div class="a" style="left:1176px;top:282px;width:1px;height:18px;background:#9a9fa7"></div><div class="a" style="left:1175px;top:282px;width:1px;height:18px;background:#9a9fa7;opacity:.6"></div><div class="a" style="left:912px;top:399px;width:18px;height:1px;background:#9a9fa7"></div><div class="a" style="left:912px;top:398px;width:18px;height:1px;background:#9a9fa7;opacity:.6"></div><div class="a" style="left:912px;top:382px;width:1px;height:18px;background:#9a9fa7"></div><div class="a" style="left:913px;top:382px;width:1px;height:18px;background:#9a9fa7;opacity:.6"></div><div class="a" style="left:1159px;top:399px;width:18px;height:1px;background:#9a9fa7"></div><div class="a" style="left:1159px;top:398px;width:18px;height:1px;background:#9a9fa7;opacity:.6"></div><div class="a" style="left:1176px;top:382px;width:1px;height:18px;background:#9a9fa7"></div><div class="a" style="left:1175px;top:382px;width:1px;height:18px;background:#9a9fa7;opacity:.6"></div><div class="a" style="left:912px;width:265px;top:369.15px;height:14px;line-height:14px;font-size:14px;text-align:center;color:#5aaac4;white-space:pre"><svg width="11" height="11" viewBox="0 0 11 11" style="vertical-align:-1px;margin-right:5px"><path d="M0 11L5.5 0 11 11z" fill="#5aaac4"/></svg>0.60M(8.66%)</div><div class="a" style="left:330px;top:423px;width:265px;height:118px;border:1px solid #a7acb5;box-sizing:border-box;"></div><div class="a" style="left:330px;top:423px;width:18px;height:1px;background:#9a9fa7"></div><div class="a" style="left:330px;top:424px;width:18px;height:1px;background:#9a9fa7;opacity:.6"></div><div class="a" style="left:330px;top:423px;width:1px;height:18px;background:#9a9fa7"></div><div class="a" style="left:331px;top:423px;width:1px;height:18px;background:#9a9fa7;opacity:.6"></div><div class="a" style="left:577px;top:423px;width:18px;height:1px;background:#9a9fa7"></div><div class="a" style="left:577px;top:424px;width:18px;height:1px;background:#9a9fa7;opacity:.6"></div><div class="a" style="left:594px;top:423px;width:1px;height:18px;background:#9a9fa7"></div><div class="a" style="left:593px;top:423px;width:1px;height:18px;background:#9a9fa7;opacity:.6"></div><div class="a" style="left:330px;top:540px;width:18px;height:1px;background:#9a9fa7"></div><div class="a" style="left:330px;top:539px;width:18px;height:1px;background:#9a9fa7;opacity:.6"></div><div class="a" style="left:330px;top:523px;width:1px;height:18px;background:#9a9fa7"></div><div class="a" style="left:331px;top:523px;width:1px;height:18px;background:#9a9fa7;opacity:.6"></div><div class="a" style="left:577px;top:540px;width:18px;height:1px;background:#9a9fa7"></div><div class="a" style="left:577px;top:539px;width:18px;height:1px;background:#9a9fa7;opacity:.6"></div><div class="a" style="left:594px;top:523px;width:1px;height:18px;background:#9a9fa7"></div><div class="a" style="left:593px;top:523px;width:1px;height:18px;background:#9a9fa7;opacity:.6"></div><div class="a" style="left:330px;width:265px;top:510.15px;height:14px;line-height:14px;font-size:14px;text-align:center;color:#5aaac4;white-space:pre"><svg width="11" height="11" viewBox="0 0 11 11" style="vertical-align:-1px;margin-right:5px"><path d="M0 11L5.5 0 11 11z" fill="#5aaac4"/></svg>1.2K(1.69%)</div><div class="a" style="left:621px;top:423px;width:265px;height:118px;border:1px solid #a7acb5;box-sizing:border-box;"></div><div class="a" style="left:621px;top:423px;width:18px;height:1px;background:#9a9fa7"></div><div class="a" style="left:621px;top:424px;width:18px;height:1px;background:#9a9fa7;opacity:.6"></div><div class="a" style="left:621px;top:423px;width:1px;height:18px;background:#9a9fa7"></div><div class="a" style="left:622px;top:423px;width:1px;height:18px;background:#9a9fa7;opacity:.6"></div><div class="a" style="left:868px;top:423px;width:18px;height:1px;background:#9a9fa7"></div><div class="a" style="left:868px;top:424px;width:18px;height:1px;background:#9a9fa7;opacity:.6"></div><div class="a" style="left:885px;top:423px;width:1px;height:18px;background:#9a9fa7"></div><div class="a" style="left:884px;top:423px;width:1px;height:18px;background:#9a9fa7;opacity:.6"></div><div class="a" style="left:621px;top:540px;width:18px;height:1px;background:#9a9fa7"></div><div class="a" style="left:621px;top:539px;width:18px;height:1px;background:#9a9fa7;opacity:.6"></div><div class="a" style="left:621px;top:523px;width:1px;height:18px;background:#9a9fa7"></div><div class="a" style="left:622px;top:523px;width:1px;height:18px;background:#9a9fa7;opacity:.6"></div><div class="a" style="left:868px;top:540px;width:18px;height:1px;background:#9a9fa7"></div><div class="a" style="left:868px;top:539px;width:18px;height:1px;background:#9a9fa7;opacity:.6"></div><div class="a" style="left:885px;top:523px;width:1px;height:18px;background:#9a9fa7"></div><div class="a" style="left:884px;top:523px;width:1px;height:18px;background:#9a9fa7;opacity:.6"></div><div class="a" style="left:621px;width:265px;top:510.15px;height:14px;line-height:14px;font-size:14px;text-align:center;color:#5aaac4;white-space:pre"><svg width="11" height="11" viewBox="0 0 11 11" style="vertical-align:-1px;margin-right:5px"><path d="M0 11L5.5 0 11 11z" fill="#5aaac4"/></svg>1.00</div><div class="a" style="left:912px;top:423px;width:265px;height:118px;border:1px solid #a7acb5;box-sizing:border-box;"></div><div class="a" style="left:912px;top:423px;width:18px;height:1px;background:#9a9fa7"></div><div class="a" style="left:912px;top:424px;width:18px;height:1px;background:#9a9fa7;opacity:.6"></div><div class="a" style="left:912px;top:423px;width:1px;height:18px;background:#9a9fa7"></div><div class="a" style="left:913px;top:423px;width:1px;height:18px;background:#9a9fa7;opacity:.6"></div><div class="a" style="left:1159px;top:423px;width:18px;height:1px;background:#9a9fa7"></div><div class="a" style="left:1159px;top:424px;width:18px;height:1px;background:#9a9fa7;opacity:.6"></div><div class="a" style="left:1176px;top:423px;width:1px;height:18px;background:#9a9fa7"></div><div class="a" style="left:1175px;top:423px;width:1px;height:18px;background:#9a9fa7;opacity:.6"></div><div class="a" style="left:912px;top:540px;width:18px;height:1px;background:#9a9fa7"></div><div class="a" style="left:912px;top:539px;width:18px;height:1px;background:#9a9fa7;opacity:.6"></div><div class="a" style="left:912px;top:523px;width:1px;height:18px;background:#9a9fa7"></div><div class="a" style="left:913px;top:523px;width:1px;height:18px;background:#9a9fa7;opacity:.6"></div><div class="a" style="left:1159px;top:540px;width:18px;height:1px;background:#9a9fa7"></div><div class="a" style="left:1159px;top:539px;width:18px;height:1px;background:#9a9fa7;opacity:.6"></div><div class="a" style="left:1176px;top:523px;width:1px;height:18px;background:#9a9fa7"></div><div class="a" style="left:1175px;top:523px;width:1px;height:18px;background:#9a9fa7;opacity:.6"></div><div class="a" style="left:912px;width:265px;top:510.15px;height:14px;line-height:14px;font-size:14px;text-align:center;color:#e27e7c;white-space:pre"><svg width="11" height="11" viewBox="0 0 11 11" style="vertical-align:-1px;margin-right:5px"><path d="M0 0h11L5.5 11z" fill="#e27e7c"/></svg>0.58%</div><div class="a" style="left:1203px;top:282px;width:344px;height:259px;border:1px solid #a7acb5;box-sizing:border-box;"></div><div class="a" style="left:1203px;top:282px;width:18px;height:1px;background:#9a9fa7"></div><div class="a" style="left:1203px;top:283px;width:18px;height:1px;background:#9a9fa7;opacity:.6"></div><div class="a" style="left:1203px;top:282px;width:1px;height:18px;background:#9a9fa7"></div><div class="a" style="left:1204px;top:282px;width:1px;height:18px;background:#9a9fa7;opacity:.6"></div><div class="a" style="left:1529px;top:282px;width:18px;height:1px;background:#9a9fa7"></div><div class="a" style="left:1529px;top:283px;width:18px;height:1px;background:#9a9fa7;opacity:.6"></div><div class="a" style="left:1546px;top:282px;width:1px;height:18px;background:#9a9fa7"></div><div class="a" style="left:1545px;top:282px;width:1px;height:18px;background:#9a9fa7;opacity:.6"></div><div class="a" style="left:1203px;top:540px;width:18px;height:1px;background:#9a9fa7"></div><div class="a" style="left:1203px;top:539px;width:18px;height:1px;background:#9a9fa7;opacity:.6"></div><div class="a" style="left:1203px;top:523px;width:1px;height:18px;background:#9a9fa7"></div><div class="a" style="left:1204px;top:523px;width:1px;height:18px;background:#9a9fa7;opacity:.6"></div><div class="a" style="left:1529px;top:540px;width:18px;height:1px;background:#9a9fa7"></div><div class="a" style="left:1529px;top:539px;width:18px;height:1px;background:#9a9fa7;opacity:.6"></div><div class="a" style="left:1546px;top:523px;width:1px;height:18px;background:#9a9fa7"></div><div class="a" style="left:1545px;top:523px;width:1px;height:18px;background:#9a9fa7;opacity:.6"></div><div class="a" style="left:1574px;top:282px;width:344px;height:259px;border:1px solid #a7acb5;box-sizing:border-box;"></div><div class="a" style="left:1574px;top:282px;width:18px;height:1px;background:#9a9fa7"></div><div class="a" style="left:1574px;top:283px;width:18px;height:1px;background:#9a9fa7;opacity:.6"></div><div class="a" style="left:1574px;top:282px;width:1px;height:18px;background:#9a9fa7"></div><div class="a" style="left:1575px;top:282px;width:1px;height:18px;background:#9a9fa7;opacity:.6"></div><div class="a" style="left:1900px;top:282px;width:18px;height:1px;background:#9a9fa7"></div><div class="a" style="left:1900px;top:283px;width:18px;height:1px;background:#9a9fa7;opacity:.6"></div><div class="a" style="left:1917px;top:282px;width:1px;height:18px;background:#9a9fa7"></div><div class="a" style="left:1916px;top:282px;width:1px;height:18px;background:#9a9fa7;opacity:.6"></div><div class="a" style="left:1574px;top:540px;width:18px;height:1px;background:#9a9fa7"></div><div class="a" style="left:1574px;top:539px;width:18px;height:1px;background:#9a9fa7;opacity:.6"></div><div class="a" style="left:1574px;top:523px;width:1px;height:18px;background:#9a9fa7"></div><div class="a" style="left:1575px;top:523px;width:1px;height:18px;background:#9a9fa7;opacity:.6"></div><div class="a" style="left:1900px;top:540px;width:18px;height:1px;background:#9a9fa7"></div><div class="a" style="left:1900px;top:539px;width:18px;height:1px;background:#9a9fa7;opacity:.6"></div><div class="a" style="left:1917px;top:523px;width:1px;height:18px;background:#9a9fa7"></div><div class="a" style="left:1916px;top:523px;width:1px;height:18px;background:#9a9fa7;opacity:.6"></div><svg class="a" style="left:1205px;top:285px" width="332" height="254" viewBox="1205 285 332 254"><defs><radialGradient id="p1205gblue" gradientUnits="userSpaceOnUse" cx="1326.5" cy="422" r="98"><stop offset="0" stop-color="#8eaad6"/><stop offset="1" stop-color="#4d7fc2"/></radialGradient><radialGradient id="p1205ggreen" gradientUnits="userSpaceOnUse" cx="1326.5" cy="422" r="98"><stop offset="0" stop-color="#c9d9a6"/><stop offset="1" stop-color="#9dbc55"/></radialGradient><radialGradient id="p1205gteal" gradientUnits="userSpaceOnUse" cx="1326.5" cy="422" r="98"><stop offset="0" stop-color="#92d0e2"/><stop offset="1" stop-color="#3fa9c8"/></radialGradient><radialGradient id="p1205glblue" gradientUnits="userSpaceOnUse" cx="1326.5" cy="422" r="98"><stop offset="0" stop-color="#aac2e4"/><stop offset="1" stop-color="#7da2d6"/></radialGradient><radialGradient id="p1205glgreen" gradientUnits="userSpaceOnUse" cx="1326.5" cy="422" r="98"><stop offset="0" stop-color="#d5e3b8"/><stop offset="1" stop-color="#bcd68e"/></radialGradient><radialGradient id="p1205glblue2" gradientUnits="userSpaceOnUse" cx="1326.5" cy="422" r="98"><stop offset="0" stop-color="#b4c8e8"/><stop offset="1" stop-color="#8aaadc"/></radialGradient><radialGradient id="p1205sblue" cx=".5" cy=".5" r=".7"><stop offset="0" stop-color="#8eaad6"/><stop offset="1" stop-color="#4d7fc2"/></radialGradient><radialGradient id="p1205sgreen" cx=".5" cy=".5" r=".7"><stop offset="0" stop-color="#c9d9a6"/><stop offset="1" stop-color="#9dbc55"/></radialGradient><radialGradient id="p1205steal" cx=".5" cy=".5" r=".7"><stop offset="0" stop-color="#92d0e2"/><stop offset="1" stop-color="#3fa9c8"/></radialGradient><radialGradient id="p1205slblue" cx=".5" cy=".5" r=".7"><stop offset="0" stop-color="#aac2e4"/><stop offset="1" stop-color="#7da2d6"/></radialGradient><radialGradient id="p1205slgreen" cx=".5" cy=".5" r=".7"><stop offset="0" stop-color="#d5e3b8"/><stop offset="1" stop-color="#bcd68e"/></radialGradient><radialGradient id="p1205slblue2" cx=".5" cy=".5" r=".7"><stop offset="0" stop-color="#b4c8e8"/><stop offset="1" stop-color="#8aaadc"/></radialGradient></defs><path d="M1326.50 422.00L1326.50 324.00A98 98 0 0 1 1420.71 395.01z" fill="url(#p1205gblue)" stroke="#cfd8e6" stroke-width=".6" stroke-opacity=".6"/><path d="M1326.50 422.00L1420.71 395.01A98 98 0 0 1 1397.81 489.22z" fill="url(#p1205ggreen)" stroke="#cfd8e6" stroke-width=".6" stroke-opacity=".6"/><path d="M1326.50 422.00L1397.81 489.22A98 98 0 0 1 1315.07 519.33z" fill="url(#p1205gteal)" stroke="#cfd8e6" stroke-width=".6" stroke-opacity=".6"/><path d="M1326.50 422.00L1315.07 519.33A98 98 0 0 1 1326.56 324.00z" fill="url(#p1205glblue)" stroke="#cfd8e6" stroke-width=".6" stroke-opacity=".6"/><text x="1338" y="381.0" font-size="14" fill="#3a4552" font-family="Liberation Sans">20.56%</text><text x="1360.3" y="441.8" font-size="14" fill="#3a4552" font-family="Liberation Sans">16.47%</text><text x="1323.4" y="482.8" font-size="14" fill="#3a4552" font-family="Liberation Sans">14.83%</text><text x="1244" y="423.8" font-size="14" fill="#3a4552" font-family="Liberation Sans">48.15%</text><rect x="1456.5" y="367.4" width="16" height="16" fill="url(#p1205sblue)"/><text x="1480.5" y="380.4" font-size="14.5" fill="#1a1a1a" font-family="Liberation Sans">Bestseller</text><rect x="1456.5" y="398.9" width="16" height="16" fill="url(#p1205sgreen)"/><text x="1480.5" y="411.9" font-size="14.5" fill="#1a1a1a" font-family="Liberation Sans">Opus</text><rect x="1456.5" y="430.4" width="16" height="16" fill="url(#p1205steal)"/><text x="1480.5" y="443.4" font-size="14.5" fill="#1a1a1a" font-family="Liberation Sans">Street One</text><rect x="1456.5" y="461.9" width="16" height="16" fill="url(#p1205slblue)"/><text x="1480.5" y="474.9" font-size="14.5" fill="#1a1a1a" font-family="Liberation Sans">Sonstige</text></svg><svg class="a" style="left:1576px;top:285px" width="340" height="254" viewBox="1576 285 340 254"><defs><radialGradient id="p1576gblue" gradientUnits="userSpaceOnUse" cx="1697.3" cy="422" r="98"><stop offset="0" stop-color="#8eaad6"/><stop offset="1" stop-color="#4d7fc2"/></radialGradient><radialGradient id="p1576ggreen" gradientUnits="userSpaceOnUse" cx="1697.3" cy="422" r="98"><stop offset="0" stop-color="#c9d9a6"/><stop offset="1" stop-color="#9dbc55"/></radialGradient><radialGradient id="p1576gteal" gradientUnits="userSpaceOnUse" cx="1697.3" cy="422" r="98"><stop offset="0" stop-color="#92d0e2"/><stop offset="1" stop-color="#3fa9c8"/></radialGradient><radialGradient id="p1576glblue" gradientUnits="userSpaceOnUse" cx="1697.3" cy="422" r="98"><stop offset="0" stop-color="#aac2e4"/><stop offset="1" stop-color="#7da2d6"/></radialGradient><radialGradient id="p1576glgreen" gradientUnits="userSpaceOnUse" cx="1697.3" cy="422" r="98"><stop offset="0" stop-color="#d5e3b8"/><stop offset="1" stop-color="#bcd68e"/></radialGradient><radialGradient id="p1576glblue2" gradientUnits="userSpaceOnUse" cx="1697.3" cy="422" r="98"><stop offset="0" stop-color="#b4c8e8"/><stop offset="1" stop-color="#8aaadc"/></radialGradient><radialGradient id="p1576sblue" cx=".5" cy=".5" r=".7"><stop offset="0" stop-color="#8eaad6"/><stop offset="1" stop-color="#4d7fc2"/></radialGradient><radialGradient id="p1576sgreen" cx=".5" cy=".5" r=".7"><stop offset="0" stop-color="#c9d9a6"/><stop offset="1" stop-color="#9dbc55"/></radialGradient><radialGradient id="p1576steal" cx=".5" cy=".5" r=".7"><stop offset="0" stop-color="#92d0e2"/><stop offset="1" stop-color="#3fa9c8"/></radialGradient><radialGradient id="p1576slblue" cx=".5" cy=".5" r=".7"><stop offset="0" stop-color="#aac2e4"/><stop offset="1" stop-color="#7da2d6"/></radialGradient><radialGradient id="p1576slgreen" cx=".5" cy=".5" r=".7"><stop offset="0" stop-color="#d5e3b8"/><stop offset="1" stop-color="#bcd68e"/></radialGradient><radialGradient id="p1576slblue2" cx=".5" cy=".5" r=".7"><stop offset="0" stop-color="#b4c8e8"/><stop offset="1" stop-color="#8aaadc"/></radialGradient></defs><path d="M1697.30 422.00L1680.79 518.60A98 98 0 0 1 1674.33 326.73z" fill="url(#p1576gblue)" stroke="#cfd8e6" stroke-width=".6" stroke-opacity=".6"/><path d="M1697.30 422.00L1674.33 326.73A98 98 0 0 1 1793.50 403.30z" fill="url(#p1576ggreen)" stroke="#cfd8e6" stroke-width=".6" stroke-opacity=".6"/><path d="M1697.30 422.00L1793.50 403.30A98 98 0 0 1 1772.79 484.49z" fill="url(#p1576gteal)" stroke="#cfd8e6" stroke-width=".6" stroke-opacity=".6"/><path d="M1697.30 422.00L1772.79 484.49A98 98 0 0 1 1722.72 516.65z" fill="url(#p1576glblue2)" stroke="#cfd8e6" stroke-width=".6" stroke-opacity=".6"/><path d="M1697.30 422.00L1722.72 516.65A98 98 0 0 1 1680.79 518.60z" fill="url(#p1576glgreen)" stroke="#cfd8e6" stroke-width=".6" stroke-opacity=".6"/><text x="1705.7" y="379.1" font-size="14" fill="#3a4552" font-family="Liberation Sans">25.71%</text><text x="1731" y="442.8" font-size="14" fill="#3a4552" font-family="Liberation Sans">14.06%</text><text x="1709" y="477.8" font-size="14" fill="#3a4552" font-family="Liberation Sans">9.82%</text><text x="1614.9" y="429.6" font-size="14" fill="#3a4552" font-family="Liberation Sans">43.54%</text><rect x="1827.8" y="352.0" width="16" height="16" fill="url(#p1576sblue)"/><text x="1851.8" y="365.0" font-size="14.5" fill="#1a1a1a" font-family="Liberation Sans">Herren</text><rect x="1827.8" y="383.5" width="16" height="16" fill="url(#p1576sgreen)"/><text x="1851.8" y="396.5" font-size="14.5" fill="#1a1a1a" font-family="Liberation Sans">Damen</text><rect x="1827.8" y="415.0" width="16" height="16" fill="url(#p1576steal)"/><text x="1851.8" y="428.0" font-size="14.5" fill="#1a1a1a" font-family="Liberation Sans">Sonstige</text><rect x="1827.8" y="446.5" width="16" height="16" fill="url(#p1576slblue2)"/><text x="1851.8" y="459.5" font-size="14.5" fill="#1a1a1a" font-family="Liberation Sans">Sport</text><rect x="1827.8" y="478.0" width="16" height="16" fill="url(#p1576slgreen)"/><text x="1851.8" y="491.0" font-size="14.5" fill="#1a1a1a" font-family="Liberation Sans">Wäsche</text></svg><div class="a" style="left:330px;top:565px;width:847px;height:424px;border:1px solid #a7acb5;box-sizing:border-box;"></div><div class="a" style="left:330px;top:565px;width:18px;height:1px;background:#9a9fa7"></div><div class="a" style="left:330px;top:566px;width:18px;height:1px;background:#9a9fa7;opacity:.6"></div><div class="a" style="left:330px;top:565px;width:1px;height:18px;background:#9a9fa7"></div><div class="a" style="left:331px;top:565px;width:1px;height:18px;background:#9a9fa7;opacity:.6"></div><div class="a" style="left:1159px;top:565px;width:18px;height:1px;background:#9a9fa7"></div><div class="a" style="left:1159px;top:566px;width:18px;height:1px;background:#9a9fa7;opacity:.6"></div><div class="a" style="left:1176px;top:565px;width:1px;height:18px;background:#9a9fa7"></div><div class="a" style="left:1175px;top:565px;width:1px;height:18px;background:#9a9fa7;opacity:.6"></div><div class="a" style="left:330px;top:988px;width:18px;height:1px;background:#9a9fa7"></div><div class="a" style="left:330px;top:987px;width:18px;height:1px;background:#9a9fa7;opacity:.6"></div><div class="a" style="left:330px;top:971px;width:1px;height:18px;background:#9a9fa7"></div><div class="a" style="left:331px;top:971px;width:1px;height:18px;background:#9a9fa7;opacity:.6"></div><div class="a" style="left:1159px;top:988px;width:18px;height:1px;background:#9a9fa7"></div><div class="a" style="left:1159px;top:987px;width:18px;height:1px;background:#9a9fa7;opacity:.6"></div><div class="a" style="left:1176px;top:971px;width:1px;height:18px;background:#9a9fa7"></div><div class="a" style="left:1175px;top:971px;width:1px;height:18px;background:#9a9fa7;opacity:.6"></div><svg class="a" style="left:0;top:0" width="1920" height="992" viewBox="0 0 1920 992"><line x1="379.2" y1="861.7" x2="1127.6" y2="861.7" stroke="#c3c8d2" stroke-width="1"/><line x1="379.2" y1="829.6" x2="1127.6" y2="829.6" stroke="#c3c8d2" stroke-width="1"/><line x1="379.2" y1="797.5" x2="1127.6" y2="797.5" stroke="#c3c8d2" stroke-width="1"/><line x1="379.2" y1="765.4" x2="1127.6" y2="765.4" stroke="#c3c8d2" stroke-width="1"/><line x1="379.2" y1="733.3" x2="1127.6" y2="733.3" stroke="#c3c8d2" stroke-width="1"/><line x1="379.2" y1="701.2" x2="1127.6" y2="701.2" stroke="#c3c8d2" stroke-width="1"/><line x1="379.2" y1="669.1" x2="1127.6" y2="669.1" stroke="#c3c8d2" stroke-width="1"/><line x1="379.2" y1="637.0" x2="1127.6" y2="637.0" stroke="#c3c8d2" stroke-width="1"/><line x1="379.2" y1="604.9" x2="1127.6" y2="604.9" stroke="#c3c8d2" stroke-width="1"/><line x1="375.7" y1="893.8" x2="379.2" y2="893.8" stroke="#8a8f98" stroke-width="1"/><line x1="1127.6" y1="893.8" x2="1131.1" y2="893.8" stroke="#8a8f98" stroke-width="1"/><line x1="375.7" y1="861.7" x2="379.2" y2="861.7" stroke="#8a8f98" stroke-width="1"/><line x1="1127.6" y1="861.7" x2="1131.1" y2="861.7" stroke="#8a8f98" stroke-width="1"/><line x1="375.7" y1="829.6" x2="379.2" y2="829.6" stroke="#8a8f98" stroke-width="1"/><line x1="1127.6" y1="829.6" x2="1131.1" y2="829.6" stroke="#8a8f98" stroke-width="1"/><line x1="375.7" y1="797.5" x2="379.2" y2="797.5" stroke="#8a8f98" stroke-width="1"/><line x1="1127.6" y1="797.5" x2="1131.1" y2="797.5" stroke="#8a8f98" stroke-width="1"/><line x1="375.7" y1="765.4" x2="379.2" y2="765.4" stroke="#8a8f98" stroke-width="1"/><line x1="1127.6" y1="765.4" x2="1131.1" y2="765.4" stroke="#8a8f98" stroke-width="1"/><line x1="375.7" y1="733.3" x2="379.2" y2="733.3" stroke="#8a8f98" stroke-width="1"/><line x1="1127.6" y1="733.3" x2="1131.1" y2="733.3" stroke="#8a8f98" stroke-width="1"/><line x1="375.7" y1="701.2" x2="379.2" y2="701.2" stroke="#8a8f98" stroke-width="1"/><line x1="1127.6" y1="701.2" x2="1131.1" y2="701.2" stroke="#8a8f98" stroke-width="1"/><line x1="375.7" y1="669.1" x2="379.2" y2="669.1" stroke="#8a8f98" stroke-width="1"/><line x1="1127.6" y1="669.1" x2="1131.1" y2="669.1" stroke="#8a8f98" stroke-width="1"/><line x1="375.7" y1="637.0" x2="379.2" y2="637.0" stroke="#8a8f98" stroke-width="1"/><line x1="1127.6" y1="637.0" x2="1131.1" y2="637.0" stroke="#8a8f98" stroke-width="1"/><line x1="375.7" y1="604.9" x2="379.2" y2="604.9" stroke="#8a8f98" stroke-width="1"/><line x1="1127.6" y1="604.9" x2="1131.1" y2="604.9" stroke="#8a8f98" stroke-width="1"/><line x1="379.2" y1="604.9" x2="379.2" y2="893.8" stroke="#8a8f98" stroke-width="1"/><line x1="1127.6" y1="604.9" x2="1127.6" y2="893.8" stroke="#8a8f98" stroke-width="1"/><rect x="416.6" y="668" width="33.2" height="225.8" fill="#6a95c9"/><rect x="458.9" y="671.2" width="33.2" height="222.6" fill="#9f5b5b"/><rect x="566.3" y="633.75" width="33.2" height="260.0" fill="#6a95c9"/><rect x="608.6" y="623.9" width="33.2" height="269.9" fill="#9f5b5b"/><rect x="716.0" y="643.9" width="33.2" height="249.9" fill="#6a95c9"/><rect x="758.3" y="668.9" width="33.2" height="224.9" fill="#9f5b5b"/><rect x="865.7" y="646.3" width="33.2" height="247.5" fill="#6a95c9"/><rect x="908.0" y="613.2" width="33.2" height="280.6" fill="#9f5b5b"/><rect x="1015.4" y="761.7" width="33.2" height="132.1" fill="#6a95c9"/><rect x="1057.7" y="758.3" width="33.2" height="135.5" fill="#9f5b5b"/><line x1="379.2" y1="893.8" x2="1127.6" y2="893.8" stroke="#8a8f98" stroke-width="1"/><line x1="454.03999999999996" y1="893.8" x2="454.03999999999996" y2="897.8" stroke="#8a8f98" stroke-width="1"/><line x1="603.72" y1="893.8" x2="603.72" y2="897.8" stroke="#8a8f98" stroke-width="1"/><line x1="753.3999999999999" y1="893.8" x2="753.3999999999999" y2="897.8" stroke="#8a8f98" stroke-width="1"/><line x1="903.0799999999999" y1="893.8" x2="903.0799999999999" y2="897.8" stroke="#8a8f98" stroke-width="1"/><line x1="1052.76" y1="893.8" x2="1052.76" y2="897.8" stroke="#8a8f98" stroke-width="1"/><path d="M454.0 682.0C479.0 676.6 553.8 653.3 603.7 649.4C653.6 645.5 703.5 657.0 753.4 658.8C803.3 660.5 853.2 641.2 903.1 659.6C953.0 678.0 1027.8 751.1 1052.8 769.4" fill="none" stroke="#7262aa" stroke-width="1.4"/><path d="M454.0 671.2C479.0 663.3 553.8 624.3 603.7 623.9C653.6 623.5 703.5 670.7 753.4 668.9C803.3 667.1 853.2 598.3 903.1 613.2C953.0 628.1 1027.8 734.1 1052.8 758.3" fill="none" stroke="#f2ac40" stroke-width="1.4"/><rect x="537" y="960.5" width="16" height="15.5" fill="#6a95c9"/><rect x="676.4" y="960.5" width="15.6" height="15.5" fill="#9f5b5b"/><line x1="816" y1="968.4" x2="845" y2="968.4" stroke="#f2ac40" stroke-width="1.5"/><line x1="899.4" y1="968.4" x2="929" y2="968.4" stroke="#7262aa" stroke-width="1.5"/></svg><div class="a" style="left:1203px;top:565px;width:715px;height:424px;box-shadow:-3px -2px 5px rgba(50,60,80,.35)"></div><div class="a" style="left:1203px;top:565px;width:715px;height:424px;border:1px solid #a7acb5;box-sizing:border-box;background:#d6dce9;"></div><div class="a" style="left:1203px;top:565px;width:18px;height:1px;background:#9a9fa7"></div><div class="a" style="left:1203px;top:566px;width:18px;height:1px;background:#9a9fa7;opacity:.6"></div><div class="a" style="left:1203px;top:565px;width:1px;height:18px;background:#9a9fa7"></div><div class="a" style="left:1204px;top:565px;width:1px;height:18px;background:#9a9fa7;opacity:.6"></div><div class="a" style="left:1900px;top:565px;width:18px;height:1px;background:#9a9fa7"></div><div class="a" style="left:1900px;top:566px;width:18px;height:1px;background:#9a9fa7;opacity:.6"></div><div class="a" style="left:1917px;top:565px;width:1px;height:18px;background:#9a9fa7"></div><div class="a" style="left:1916px;top:565px;width:1px;height:18px;background:#9a9fa7;opacity:.6"></div><div class="a" style="left:1203px;top:988px;width:18px;height:1px;background:#9a9fa7"></div><div class="a" style="left:1203px;top:987px;width:18px;height:1px;background:#9a9fa7;opacity:.6"></div><div class="a" style="left:1203px;top:971px;width:1px;height:18px;background:#9a9fa7"></div><div class="a" style="left:1204px;top:971px;width:1px;height:18px;background:#9a9fa7;opacity:.6"></div><div class="a" style="left:1900px;top:988px;width:18px;height:1px;background:#9a9fa7"></div><div class="a" style="left:1900px;top:987px;width:18px;height:1px;background:#9a9fa7;opacity:.6"></div><div class="a" style="left:1917px;top:971px;width:1px;height:18px;background:#9a9fa7"></div><div class="a" style="left:1916px;top:971px;width:1px;height:18px;background:#9a9fa7;opacity:.6"></div><div class="a" style="left:1204px;top:610px;width:713px;height:1px;background:#1a1a1a"></div><div class="a" style="left:1204px;top:608px;width:72px;height:4px;background:#0a0a0a"></div><svg class="a" style="left:1901px;top:583px;" width="4" height="12" viewBox="0 0 4 12"><circle cx="2" cy="2" r="1.3" fill="#222"/><circle cx="2" cy="6" r="1.3" fill="#222"/><circle cx="2" cy="10" r="1.3" fill="#222"/></svg><div class="a" style="left:1222.5px;top:652px;width:661.0px;height:253px;background:#fff"></div><div class="a" style="left:1223.5px;top:653px;width:172.5px;height:41px;background:#4f80bd"></div><div class="a" style="left:1397px;top:653px;width:119.20000000000005px;height:41px;background:#4f80bd"></div><div class="a" style="left:1517.2px;top:653px;width:143.20000000000005px;height:41px;background:#4f80bd"></div><div class="a" style="left:1661.4px;top:653px;width:103.89999999999986px;height:41px;background:#4f80bd"></div><div class="a" style="left:1766.3px;top:653px;width:116.20000000000005px;height:41px;background:#4f80bd"></div><div class="a" style="left:1223.5px;top:695px;width:172.5px;height:41px;background:#94b2d7"></div><div class="a" style="left:1397px;top:695px;width:119.20000000000005px;height:41px;background:#94b2d7"></div><div class="a" style="left:1517.2px;top:695px;width:143.20000000000005px;height:41px;background:#94b2d7"></div><div class="a" style="left:1661.4px;top:695px;width:103.89999999999986px;height:41px;background:#94b2d7"></div><div class="a" style="left:1766.3px;top:695px;width:116.20000000000005px;height:41px;background:#94b2d7"></div><div class="a" style="left:1223.5px;top:737px;width:172.5px;height:41px;background:#b7cae5"></div><div class="a" style="left:1397px;top:737px;width:119.20000000000005px;height:41px;background:#b7cae5"></div><div class="a" style="left:1517.2px;top:737px;width:143.20000000000005px;height:41px;background:#b7cae5"></div><div class="a" style="left:1661.4px;top:737px;width:103.89999999999986px;height:41px;background:#b7cae5"></div><div class="a" style="left:1766.3px;top:737px;width:116.20000000000005px;height:41px;background:#b7cae5"></div><div class="a" style="left:1223.5px;top:779px;width:172.5px;height:41px;background:#94b2d7"></div><div class="a" style="left:1397px;top:779px;width:119.20000000000005px;height:41px;background:#94b2d7"></div><div class="a" style="left:1517.2px;top:779px;width:143.20000000000005px;height:41px;background:#94b2d7"></div><div class="a" style="left:1661.4px;top:779px;width:103.89999999999986px;height:41px;background:#94b2d7"></div><div class="a" style="left:1766.3px;top:779px;width:116.20000000000005px;height:41px;background:#94b2d7"></div><div class="a" style="left:1223.5px;top:821px;width:172.5px;height:41px;background:#b7cae5"></div><div class="a" style="left:1397px;top:821px;width:119.20000000000005px;height:41px;background:#b7cae5"></div><div class="a" style="left:1517.2px;top:821px;width:143.20000000000005px;height:41px;background:#b7cae5"></div><div class="a" style="left:1661.4px;top:821px;width:103.89999999999986px;height:41px;background:#b7cae5"></div><div class="a" style="left:1766.3px;top:821px;width:116.20000000000005px;height:41px;background:#b7cae5"></div><div class="a" style="left:1223.5px;top:863px;width:172.5px;height:41px;background:#4f80bd"></div><div class="a" style="left:1397px;top:863px;width:119.20000000000005px;height:41px;background:#4f80bd"></div><div class="a" style="left:1517.2px;top:863px;width:143.20000000000005px;height:41px;background:#4f80bd"></div><div class="a" style="left:1661.4px;top:863px;width:103.89999999999986px;height:41px;background:#4f80bd"></div><div class="a" style="left:1766.3px;top:863px;width:116.20000000000005px;height:41px;background:#4f80bd"></div>
<span class="t" style="left:1555.00px;top:11.84px;font-size:12px;line-height:12px;color:#50555e;font-weight:normal;transform:scale(0.9753,1.0000);transform-origin:left 10.16px;-webkit-text-stroke:0.25px currentColor;">Welche Funktion suchst du? Gib hier etwas ein.</span>
<span class="t" style="left:1893.00px;top:11.00px;font-size:13px;line-height:13px;color:#111;font-weight:normal;transform:scale(0.8737,1.0000);transform-origin:left 11.00px;-webkit-text-stroke:0.25px currentColor;">Start</span>
<span class="t" style="left:56.00px;top:42.65px;font-size:14px;line-height:14px;color:#1e1e28;font-weight:normal;transform:scale(0.8710,1.0000);transform-origin:left 11.85px;-webkit-text-stroke:0.25px currentColor;">EDIFACT</span>
<span class="t" style="left:149.00px;top:42.65px;font-size:14px;line-height:14px;color:#1e1e28;font-weight:normal;transform:scale(0.9868,1.0000);transform-origin:left 11.85px;-webkit-text-stroke:0.25px currentColor;">Order/Wareneingang</span>
<span class="t" style="left:324.00px;top:42.65px;font-size:14px;line-height:14px;color:#1e1e28;font-weight:normal;transform:scale(0.9801,1.0000);transform-origin:left 11.85px;-webkit-text-stroke:0.25px currentColor;">Warenmanagement</span>
<span class="t" style="left:488.00px;top:42.65px;font-size:14px;line-height:14px;color:#1e1e28;font-weight:normal;transform:scale(0.9751,1.0000);transform-origin:left 11.85px;-webkit-text-stroke:0.25px currentColor;">Rechnungen/Zahlungen</span>
<span class="t" style="left:678.00px;top:42.65px;font-size:14px;line-height:14px;color:#1e1e28;font-weight:normal;transform:scale(0.9596,1.0000);transform-origin:left 11.85px;-webkit-text-stroke:0.25px currentColor;">Kasse/Fakturierung</span>
<span class="t" style="left:980.00px;top:42.65px;font-size:14px;line-height:14px;color:#1e1e28;font-weight:normal;transform:scale(0.9250,1.0000);transform-origin:left 11.85px;-webkit-text-stroke:0.25px currentColor;">CRM</span>
<span class="t" style="left:1047.50px;top:42.65px;font-size:14px;line-height:14px;color:#1e1e28;font-weight:normal;transform:scale(0.9606,1.0000);transform-origin:left 11.85px;-webkit-text-stroke:0.25px currentColor;">Schnittstellen</span>
<span class="t" style="left:1167.50px;top:42.65px;font-size:14px;line-height:14px;color:#1e1e28;font-weight:normal;transform:scale(0.9549,1.0000);transform-origin:left 11.85px;-webkit-text-stroke:0.25px currentColor;">Webshop</span>
<span class="t" style="left:1263.00px;top:42.65px;font-size:14px;line-height:14px;color:#1e1e28;font-weight:normal;transform:scale(1.0182,1.0000);transform-origin:left 11.85px;-webkit-text-stroke:0.25px currentColor;">Mobile</span>
<span class="t" style="left:1344.00px;top:42.65px;font-size:14px;line-height:14px;color:#1e1e28;font-weight:normal;transform:scale(0.9701,1.0000);transform-origin:left 11.85px;-webkit-text-stroke:0.25px currentColor;">Stammdaten</span>
<span class="t" style="left:1463.00px;top:42.65px;font-size:14px;line-height:14px;color:#1e1e28;font-weight:normal;transform:scale(0.9637,1.0000);transform-origin:left 11.85px;-webkit-text-stroke:0.25px currentColor;">Reorganisation</span>
<span class="t" style="left:1594.50px;top:42.65px;font-size:14px;line-height:14px;color:#1e1e28;font-weight:normal;transform:scale(0.8819,1.0000);transform-origin:left 11.85px;-webkit-text-stroke:0.25px currentColor;">Extras</span>
<span class="t" style="left:1667.50px;top:42.65px;font-size:14px;line-height:14px;color:#1e1e28;font-weight:normal;transform:scale(1.0130,1.0000);transform-origin:left 11.85px;-webkit-text-stroke:0.25px currentColor;">Inventur</span>
<span class="t" style="left:851.00px;top:42.65px;font-size:14px;line-height:14px;color:#1b1b74;font-weight:bold;transform:scale(0.9770,1.0000);transform-origin:left 11.85px;-webkit-text-stroke:0.25px currentColor;">Auswertungen</span>
<span class="t" style="left:7.00px;top:106.34px;font-size:12px;line-height:12px;color:#1a1a1a;font-weight:normal;transform:scale(0.9433,1.0000);transform-origin:left 10.16px;-webkit-text-stroke:0.25px currentColor;">Bestellanalyse</span>
<span class="t" style="left:95.50px;top:106.34px;font-size:12px;line-height:12px;color:#1a1a1a;font-weight:normal;transform:scale(0.9707,1.0000);transform-origin:left 10.16px;-webkit-text-stroke:0.25px currentColor;">Dashboard</span>
<span class="t" style="left:158.50px;top:106.34px;font-size:12px;line-height:12px;color:#1a1a1a;font-weight:normal;transform:scale(1.0068,1.0000);transform-origin:left 10.16px;-webkit-text-stroke:0.25px currentColor;">Unternehmerinfo</span>
<span class="t" style="left:255.60px;top:106.34px;font-size:12px;line-height:12px;color:#1a1a1a;font-weight:normal;transform:scale(0.8361,1.0000);transform-origin:left 10.16px;-webkit-text-stroke:0.25px currentColor;">KWER</span>
<span class="t" style="left:293.00px;top:106.34px;font-size:12px;line-height:12px;color:#1a1a1a;font-weight:normal;transform:scale(0.9433,1.0000);transform-origin:left 10.16px;-webkit-text-stroke:0.25px currentColor;">Renner-</span>
<span class="t" style="left:295.30px;top:124.34px;font-size:12px;line-height:12px;color:#1a1a1a;font-weight:normal;transform:scale(0.9482,1.0000);transform-origin:left 10.16px;-webkit-text-stroke:0.25px currentColor;">Penner</span>
<span class="t" style="left:341.30px;top:106.34px;font-size:12px;line-height:12px;color:#1a1a1a;font-weight:normal;transform:scale(0.9715,1.0000);transform-origin:left 10.16px;-webkit-text-stroke:0.25px currentColor;">Größenstatistik</span>
<span class="t" style="left:426.30px;top:106.34px;font-size:12px;line-height:12px;color:#1a1a1a;font-weight:normal;transform:scale(0.9775,1.0000);transform-origin:left 10.16px;-webkit-text-stroke:0.25px currentColor;">Altersstatistik</span>
<span class="t" style="left:502.00px;top:106.34px;font-size:12px;line-height:12px;color:#1a1a1a;font-weight:normal;transform:scale(0.9563,1.0000);transform-origin:left 10.16px;-webkit-text-stroke:0.25px currentColor;">Kreuztabelle</span>
<span class="t" style="left:580.80px;top:106.34px;font-size:12px;line-height:12px;color:#1a1a1a;font-weight:normal;transform:scale(0.9482,1.0000);transform-origin:left 10.16px;-webkit-text-stroke:0.25px currentColor;">Verkaufsanalyse</span>
<span class="t" style="left:670.80px;top:106.34px;font-size:12px;line-height:12px;color:#1a1a1a;font-weight:normal;transform:scale(0.9610,1.0000);transform-origin:left 10.16px;-webkit-text-stroke:0.25px currentColor;">Tagesumsatzstatistik</span>
<span class="t" style="left:783.20px;top:106.34px;font-size:12px;line-height:12px;color:#1a1a1a;font-weight:normal;-webkit-text-stroke:0.25px currentColor;">Monatsumsatzstatistik</span>
<span class="t" style="left:907.20px;top:106.34px;font-size:12px;line-height:12px;color:#1a1a1a;font-weight:normal;transform:scale(0.9917,1.0000);transform-origin:left 10.16px;-webkit-text-stroke:0.25px currentColor;">Prämienstatistik</span>
<span class="t" style="left:997.40px;top:106.34px;font-size:12px;line-height:12px;color:#7d869a;font-weight:normal;transform:scale(0.9472,1.0000);transform-origin:left 10.16px;-webkit-text-stroke:0.25px currentColor;">Umsatzanalyse</span>
<span class="t" style="left:1090.30px;top:106.34px;font-size:12px;line-height:12px;color:#1a1a1a;font-weight:normal;transform:scale(0.9947,1.0000);transform-origin:left 10.16px;-webkit-text-stroke:0.25px currentColor;">Artikelliste</span>
<span class="t" style="left:1151.30px;top:106.34px;font-size:12px;line-height:12px;color:#1a1a1a;font-weight:normal;transform:scale(0.9716,1.0000);transform-origin:left 10.16px;-webkit-text-stroke:0.25px currentColor;">Bestandsauskunft</span>
<span class="t" style="left:1272.20px;top:106.34px;font-size:12px;line-height:12px;color:#1a1a1a;font-weight:normal;transform:scale(1.0137,1.0000);transform-origin:left 10.16px;-webkit-text-stroke:0.25px currentColor;">Artikel</span>
<span class="t" style="left:1250.30px;top:124.34px;font-size:12px;line-height:12px;color:#1a1a1a;font-weight:normal;transform:scale(0.9458,1.0000);transform-origin:left 10.16px;-webkit-text-stroke:0.25px currentColor;">Größenanalyse</span>
<span class="t" style="left:1334.00px;top:106.34px;font-size:12px;line-height:12px;color:#1a1a1a;font-weight:normal;transform:scale(0.9652,1.0000);transform-origin:left 10.16px;-webkit-text-stroke:0.25px currentColor;">Etikettenanalyse</span>
<span class="t" style="left:1364.60px;top:124.34px;font-size:12px;line-height:12px;color:#1a1a1a;font-weight:normal;transform:scale(0.8961,1.0000);transform-origin:left 10.16px;-webkit-text-stroke:0.25px currentColor;">[EDI]</span>
<span class="t" style="left:1434.30px;top:106.34px;font-size:12px;line-height:12px;color:#1a1a1a;font-weight:normal;transform:scale(0.9738,1.0000);transform-origin:left 10.16px;-webkit-text-stroke:0.25px currentColor;">Renditekiller</span>
<span class="t" style="left:1505.40px;top:106.34px;font-size:12px;line-height:12px;color:#1a1a1a;font-weight:normal;-webkit-text-stroke:0.25px currentColor;">Performancekontrolle</span>
<span class="t" style="left:1635.40px;top:106.34px;font-size:12px;line-height:12px;color:#1a1a1a;font-weight:normal;transform:scale(1.0141,1.0000);transform-origin:left 10.16px;-webkit-text-stroke:0.25px currentColor;">Modellliste</span>
<span class="t" style="left:1699.20px;top:106.34px;font-size:12px;line-height:12px;color:#1a1a1a;font-weight:normal;transform:scale(1.0229,1.0000);transform-origin:left 10.16px;-webkit-text-stroke:0.25px currentColor;">Modellliste</span>
<span class="t" style="left:1699.20px;top:124.34px;font-size:12px;line-height:12px;color:#1a1a1a;font-weight:normal;transform:scale(0.9686,1.0000);transform-origin:left 10.16px;-webkit-text-stroke:0.25px currentColor;">nach Filiale</span>
<span class="t" style="left:7.00px;top:145.34px;font-size:12px;line-height:12px;color:#4e5668;font-weight:normal;transform:scale(0.9401,1.0000);transform-origin:left 10.16px;-webkit-text-stroke:0.25px currentColor;">Orderanalysen</span>
<span class="t" style="left:269.20px;top:145.34px;font-size:12px;line-height:12px;color:#4e5668;font-weight:normal;transform:scale(0.9712,1.0000);transform-origin:left 10.16px;-webkit-text-stroke:0.25px currentColor;">Unternehmensanalysen</span>
<span class="t" style="left:786.10px;top:145.34px;font-size:12px;line-height:12px;color:#4e5668;font-weight:normal;transform:scale(0.9524,1.0000);transform-origin:left 10.16px;-webkit-text-stroke:0.25px currentColor;">Umsatzanalysen</span>
<span class="t" style="left:1215.40px;top:145.34px;font-size:12px;line-height:12px;color:#4e5668;font-weight:normal;transform:scale(0.9745,1.0000);transform-origin:left 10.16px;-webkit-text-stroke:0.25px currentColor;">Artikelanalysen</span>
<span class="t" style="left:1468.20px;top:145.34px;font-size:12px;line-height:12px;color:#4e5668;font-weight:normal;transform:scale(0.9870,1.0000);transform-origin:left 10.16px;-webkit-text-stroke:0.25px currentColor;">Rendite / Performence</span>
<span class="t" style="left:1662.20px;top:145.34px;font-size:12px;line-height:12px;color:#4e5668;font-weight:normal;transform:scale(0.9699,1.0000);transform-origin:left 10.16px;-webkit-text-stroke:0.25px currentColor;">Weitere listen</span>
<span class="t" style="left:6.50px;top:168.69px;font-size:11px;line-height:11px;color:#777c86;font-weight:normal;transform:scale(0.9831,1.0000);transform-origin:left 9.31px;-webkit-text-stroke:0.25px currentColor;">Programme</span>
<span class="t" style="left:23.40px;top:200.69px;font-size:11px;line-height:11px;color:#28468a;font-weight:bold;transform:scale(1.0108,1.0000);transform-origin:left 9.31px;-webkit-text-stroke:0.25px currentColor;">Zuletzt benutzte Programme</span>
<span class="t" style="left:39.50px;top:227.99px;font-size:11px;line-height:11px;color:#111;font-weight:normal;transform:scale(0.9846,1.0000);transform-origin:left 9.31px;-webkit-text-stroke:0.25px currentColor;">Dashboard</span>
<span class="t" style="left:39.50px;top:245.99px;font-size:11px;line-height:11px;color:#111;font-weight:normal;-webkit-text-stroke:0.25px currentColor;">Renner-Penner</span>
<span class="t" style="left:39.50px;top:263.99px;font-size:11px;line-height:11px;color:#111;font-weight:normal;transform:scale(1.0071,1.0000);transform-origin:left 9.31px;-webkit-text-stroke:0.25px currentColor;">Etikettenanalyse [EDI]</span>
<span class="t" style="left:39.50px;top:281.99px;font-size:11px;line-height:11px;color:#111;font-weight:normal;transform:scale(1.0141,1.0000);transform-origin:left 9.31px;-webkit-text-stroke:0.25px currentColor;">Wincash 5000 Cockpit</span>
<span class="t" style="left:39.50px;top:299.99px;font-size:11px;line-height:11px;color:#111;font-weight:normal;-webkit-text-stroke:0.25px currentColor;">Wincash 5000 überwachen</span>
<span class="t" style="left:39.50px;top:317.99px;font-size:11px;line-height:11px;color:#111;font-weight:normal;-webkit-text-stroke:0.25px currentColor;">Reduzierung für Webshop</span>
<span class="t" style="left:39.50px;top:335.99px;font-size:11px;line-height:11px;color:#111;font-weight:normal;-webkit-text-stroke:0.25px currentColor;">Web-Export</span>
<span class="t" style="left:39.50px;top:353.99px;font-size:11px;line-height:11px;color:#111;font-weight:normal;transform:scale(1.0113,1.0000);transform-origin:left 9.31px;-webkit-text-stroke:0.25px currentColor;">Export Definitionen</span>
<span class="t" style="left:39.50px;top:371.99px;font-size:11px;line-height:11px;color:#111;font-weight:normal;transform:scale(1.0286,1.0000);transform-origin:left 9.31px;-webkit-text-stroke:0.25px currentColor;">Vertriebskanäle</span>
<span class="t" style="left:39.50px;top:389.99px;font-size:11px;line-height:11px;color:#111;font-weight:normal;transform:scale(1.0264,1.0000);transform-origin:left 9.31px;-webkit-text-stroke:0.25px currentColor;">Auswahl-/Reservierunsanalyse</span>
<span class="t" style="left:23.40px;top:434.69px;font-size:11px;line-height:11px;color:#28468a;font-weight:bold;transform:scale(1.0093,1.0000);transform-origin:left 9.31px;-webkit-text-stroke:0.25px currentColor;">Häufig verwendete Programme</span>
<span class="t" style="left:39.50px;top:461.99px;font-size:11px;line-height:11px;color:#111;font-weight:normal;transform:scale(0.9846,1.0000);transform-origin:left 9.31px;-webkit-text-stroke:0.25px currentColor;">Dashboard</span>
<span class="t" style="left:39.50px;top:479.99px;font-size:11px;line-height:11px;color:#111;font-weight:normal;-webkit-text-stroke:0.25px currentColor;">Wareneingang Erfassen</span>
<span class="t" style="left:39.50px;top:497.99px;font-size:11px;line-height:11px;color:#111;font-weight:normal;transform:scale(1.0141,1.0000);transform-origin:left 9.31px;-webkit-text-stroke:0.25px currentColor;">Wincash 5000 Cockpit</span>
<span class="t" style="left:39.50px;top:515.99px;font-size:11px;line-height:11px;color:#111;font-weight:normal;-webkit-text-stroke:0.25px currentColor;">Unternehmerinfo</span>
<span class="t" style="left:39.50px;top:533.99px;font-size:11px;line-height:11px;color:#111;font-weight:normal;transform:scale(1.0108,1.0000);transform-origin:left 9.31px;-webkit-text-stroke:0.25px currentColor;">Inventurverarbeitung</span>
<span class="t" style="left:39.50px;top:551.99px;font-size:11px;line-height:11px;color:#111;font-weight:normal;transform:scale(1.0203,1.0000);transform-origin:left 9.31px;-webkit-text-stroke:0.25px currentColor;">Ordererfassung/-Korrektur</span>
<span class="t" style="left:39.50px;top:569.99px;font-size:11px;line-height:11px;color:#111;font-weight:normal;-webkit-text-stroke:0.25px currentColor;">Neuigkeiten aus dem Hause Hiltes</span>
<span class="t" style="left:39.50px;top:587.99px;font-size:11px;line-height:11px;color:#111;font-weight:normal;transform:scale(1.0186,1.0000);transform-origin:left 9.31px;-webkit-text-stroke:0.25px currentColor;">Kundenstatistik</span>
<span class="t" style="left:39.50px;top:605.99px;font-size:11px;line-height:11px;color:#111;font-weight:normal;-webkit-text-stroke:0.25px currentColor;">Lieferanten</span>
<span class="t" style="left:39.50px;top:623.99px;font-size:11px;line-height:11px;color:#111;font-weight:normal;transform:scale(0.9810,1.0000);transform-origin:left 9.31px;-webkit-text-stroke:0.25px currentColor;">Mandanten</span>
<span class="t" style="left:40.60px;top:969.69px;font-size:11px;line-height:11px;color:#111;font-weight:normal;transform:scale(0.9744,1.0000);transform-origin:left 9.31px;-webkit-text-stroke:0.25px currentColor;">Programme</span>
<span class="t" style="left:143.30px;top:969.69px;font-size:11px;line-height:11px;color:#6b717c;font-weight:normal;transform:scale(0.9552,1.0000);transform-origin:left 9.31px;-webkit-text-stroke:0.25px currentColor;">Aufgaben</span>
<span class="t" style="left:233.30px;top:969.69px;font-size:11px;line-height:11px;color:#6b717c;font-weight:normal;transform:scale(0.9736,1.0000);transform-origin:left 9.31px;-webkit-text-stroke:0.25px currentColor;">Meldungen</span>
<span class="t" style="left:653.50px;top:176.85px;font-size:14px;line-height:14px;color:#2b1f22;font-weight:normal;transform:scale(1.0084,1.0000);transform-origin:left 11.85px;">SIE SEHEN DEMO-DATEN. UM IHRE ECHTEN DATEN IM DASHBOARD DARZUSTELLEN, WENDEN SIE SICH BITTE AN DEN HILTES SUPPORT</span>
<span class="t" style="left:339.60px;top:221.90px;font-size:28px;line-height:28px;color:#0c0c0c;font-weight:bold;transform:scale(1.0168,1.0000);transform-origin:left 23.70px;">Unternehmensübersicht</span>
<span class="t" style="left:1640.50px;top:225.65px;font-size:14px;line-height:14px;color:#111;font-weight:normal;">Mar 2022 ~ Mar 2022</span>
<span class="t" style="left:424.38px;top:299.15px;font-size:14px;line-height:14px;color:#1a1a1a;font-weight:normal;">Erz. Umsatz</span>
<span class="t" style="left:410.70px;top:324.07px;font-size:33px;line-height:33px;color:#0a0a0a;font-weight:normal;transform:scale(1.0000,1.0500);transform-origin:center 27.93px;">176.2K</span>
<span class="t" style="left:708.23px;top:299.15px;font-size:14px;line-height:14px;color:#1a1a1a;font-weight:normal;">Wareneingang</span>
<span class="t" style="left:692.52px;top:324.07px;font-size:33px;line-height:33px;color:#0a0a0a;font-weight:normal;transform:scale(1.0000,1.0500);transform-origin:center 27.93px;">138.93K</span>
<span class="t" style="left:1018.81px;top:299.15px;font-size:14px;line-height:14px;color:#1a1a1a;font-weight:normal;">Bestand</span>
<span class="t" style="left:999.14px;top:324.07px;font-size:33px;line-height:33px;color:#0a0a0a;font-weight:normal;transform:scale(1.0000,1.0500);transform-origin:center 27.93px;">7.56M</span>
<span class="t" style="left:431.37px;top:440.15px;font-size:14px;line-height:14px;color:#1a1a1a;font-weight:normal;">Rohertrag</span>
<span class="t" style="left:419.88px;top:465.07px;font-size:33px;line-height:33px;color:#0a0a0a;font-weight:normal;transform:scale(1.0000,1.0500);transform-origin:center 27.93px;">74.1K</span>
<span class="t" style="left:714.97px;top:440.15px;font-size:14px;line-height:14px;color:#1a1a1a;font-weight:normal;">Erz. Spanne</span>
<span class="t" style="left:712.70px;top:465.07px;font-size:33px;line-height:33px;color:#0a0a0a;font-weight:normal;transform:scale(1.0000,1.0500);transform-origin:center 27.93px;">50.02</span>
<span class="t" style="left:1012.98px;top:440.15px;font-size:14px;line-height:14px;color:#1a1a1a;font-weight:normal;">Abverkauf</span>
<span class="t" style="left:990.26px;top:465.07px;font-size:33px;line-height:33px;color:#0a0a0a;font-weight:normal;transform:scale(1.0000,1.0500);transform-origin:center 27.93px;">11.42%</span>
<span class="t" style="left:1355.61px;top:295.30px;font-size:15px;line-height:15px;color:#111;font-weight:bold;">Label</span>
<span class="t" style="left:1693.36px;top:295.30px;font-size:15px;line-height:15px;color:#111;font-weight:bold;">Warengruppen</span>
<span class="t" style="left:728.48px;top:577.80px;font-size:15px;line-height:15px;color:#111;font-weight:bold;">Verlauf</span>
<span class="t" style="left:348.91px;top:888.24px;font-size:12px;line-height:12px;color:#111;font-weight:normal;">0.0K</span>
<span class="t" style="left:1133.20px;top:888.24px;font-size:12px;line-height:12px;color:#111;font-weight:normal;">0.0K</span>
<span class="t" style="left:348.91px;top:856.14px;font-size:12px;line-height:12px;color:#111;font-weight:normal;">5.0K</span>
<span class="t" style="left:1133.20px;top:856.14px;font-size:12px;line-height:12px;color:#111;font-weight:normal;">5.0K</span>
<span class="t" style="left:342.24px;top:824.04px;font-size:12px;line-height:12px;color:#111;font-weight:normal;">10.0K</span>
<span class="t" style="left:1133.20px;top:824.04px;font-size:12px;line-height:12px;color:#111;font-weight:normal;">10.0K</span>
<span class="t" style="left:342.24px;top:791.94px;font-size:12px;line-height:12px;color:#111;font-weight:normal;">15.0K</span>
<span class="t" style="left:1133.20px;top:791.94px;font-size:12px;line-height:12px;color:#111;font-weight:normal;">15.0K</span>
<span class="t" style="left:342.24px;top:759.84px;font-size:12px;line-height:12px;color:#111;font-weight:normal;">20.0K</span>
<span class="t" style="left:1133.20px;top:759.84px;font-size:12px;line-height:12px;color:#111;font-weight:normal;">20.0K</span>
<span class="t" style="left:342.24px;top:727.74px;font-size:12px;line-height:12px;color:#111;font-weight:normal;">25.0K</span>
<span class="t" style="left:1133.20px;top:727.74px;font-size:12px;line-height:12px;color:#111;font-weight:normal;">25.0K</span>
<span class="t" style="left:342.24px;top:695.64px;font-size:12px;line-height:12px;color:#111;font-weight:normal;">30.0K</span>
<span class="t" style="left:1133.20px;top:695.64px;font-size:12px;line-height:12px;color:#111;font-weight:normal;">30.0K</span>
<span class="t" style="left:342.24px;top:663.54px;font-size:12px;line-height:12px;color:#111;font-weight:normal;">35.0K</span>
<span class="t" style="left:1133.20px;top:663.54px;font-size:12px;line-height:12px;color:#111;font-weight:normal;">35.0K</span>
<span class="t" style="left:342.24px;top:631.44px;font-size:12px;line-height:12px;color:#111;font-weight:normal;">40.0K</span>
<span class="t" style="left:1133.20px;top:631.44px;font-size:12px;line-height:12px;color:#111;font-weight:normal;">40.0K</span>
<span class="t" style="left:342.24px;top:599.34px;font-size:12px;line-height:12px;color:#111;font-weight:normal;">45.0K</span>
<span class="t" style="left:1133.20px;top:599.34px;font-size:12px;line-height:12px;color:#111;font-weight:normal;">45.0K</span>
<span class="t" style="left:450.92px;top:903.70px;font-size:13px;line-height:13px;color:#111;font-weight:normal;">9</span>
<span class="t" style="left:596.99px;top:903.70px;font-size:13px;line-height:13px;color:#111;font-weight:normal;">10</span>
<span class="t" style="left:747.15px;top:903.70px;font-size:13px;line-height:13px;color:#111;font-weight:normal;">11</span>
<span class="t" style="left:896.35px;top:903.70px;font-size:13px;line-height:13px;color:#111;font-weight:normal;">12</span>
<span class="t" style="left:1046.03px;top:903.70px;font-size:13px;line-height:13px;color:#111;font-weight:normal;">13</span>
<span class="t" style="left:705.24px;top:927.85px;font-size:14px;line-height:14px;color:#111;font-weight:normal;">Kalenderwoche</span>
<span class="t" style="left:563.00px;top:960.75px;font-size:14px;line-height:14px;color:#111;font-weight:normal;">Umsatz Vorjahr</span>
<span class="t" style="left:701.60px;top:960.75px;font-size:14px;line-height:14px;color:#111;font-weight:normal;">Umsatz Aktuell</span>
<span class="t" style="left:846.90px;top:960.75px;font-size:14px;line-height:14px;color:#111;font-weight:normal;">Aktuell</span>
<span class="t" style="left:930.70px;top:960.75px;font-size:14px;line-height:14px;color:#111;font-weight:normal;">Vorjahr</span>
<span class="t" style="left:1217.00px;top:582.15px;font-size:14px;line-height:14px;color:#1a1a1a;font-weight:normal;transform:scale(1.0415,1.0000);transform-origin:left 11.85px;">Filialen</span>
<span class="t" style="left:1290.30px;top:582.15px;font-size:14px;line-height:14px;color:#1a1a1a;font-weight:normal;transform:scale(1.0370,1.0000);transform-origin:left 11.85px;">Lieferant</span>
<span class="t" style="left:1373.70px;top:582.15px;font-size:14px;line-height:14px;color:#1a1a1a;font-weight:normal;transform:scale(1.0218,1.0000);transform-origin:left 11.85px;">Warengruppen</span>
<span class="t" style="left:1494.50px;top:582.15px;font-size:14px;line-height:14px;color:#1a1a1a;font-weight:normal;transform:scale(1.0370,1.0000);transform-origin:left 11.85px;">Vertriebskanal</span>
<span class="t" style="left:1534.16px;top:635.30px;font-size:15px;line-height:15px;color:#111;font-weight:bold;">Filialen</span>
<span class="t" style="left:1289.91px;top:667.65px;font-size:14px;line-height:14px;color:#fff;font-weight:bold;">Filiale</span>
<span class="t" style="left:1416.42px;top:667.65px;font-size:14px;line-height:14px;color:#fff;font-weight:bold;">Erz. Umsatz</span>
<span class="t" style="left:1538.11px;top:667.65px;font-size:14px;line-height:14px;color:#fff;font-weight:bold;">Erz. Umsatz VJ</span>
<span class="t" style="left:1687.56px;top:667.65px;font-size:14px;line-height:14px;color:#fff;font-weight:bold;">Spanne</span>
<span class="t" style="left:1788.10px;top:667.65px;font-size:14px;line-height:14px;color:#fff;font-weight:bold;">Spanne VJ</span>
<span class="t" style="left:1232.00px;top:709.15px;font-size:14px;line-height:14px;color:#1a1a1a;font-weight:normal;">Leer</span>
<span class="t" style="left:1461.62px;top:709.15px;font-size:14px;line-height:14px;color:#1a1a1a;font-weight:normal;">58.69K</span>
<span class="t" style="left:1613.61px;top:709.15px;font-size:14px;line-height:14px;color:#1a1a1a;font-weight:normal;">55.1K</span>
<span class="t" style="left:1720.05px;top:709.15px;font-size:14px;line-height:14px;color:#1a1a1a;font-weight:normal;">50.05</span>
<span class="t" style="left:1837.25px;top:709.15px;font-size:14px;line-height:14px;color:#1a1a1a;font-weight:normal;">49.05</span>
<span class="t" style="left:1232.00px;top:751.15px;font-size:14px;line-height:14px;color:#1a1a1a;font-weight:normal;">Sindelfingen</span>
<span class="t" style="left:1461.62px;top:751.15px;font-size:14px;line-height:14px;color:#1a1a1a;font-weight:normal;">54.28K</span>
<span class="t" style="left:1613.61px;top:751.15px;font-size:14px;line-height:14px;color:#1a1a1a;font-weight:normal;">51.0K</span>
<span class="t" style="left:1720.05px;top:751.15px;font-size:14px;line-height:14px;color:#1a1a1a;font-weight:normal;">49.90</span>
<span class="t" style="left:1837.25px;top:751.15px;font-size:14px;line-height:14px;color:#1a1a1a;font-weight:normal;">48.91</span>
<span class="t" style="left:1232.00px;top:793.15px;font-size:14px;line-height:14px;color:#1a1a1a;font-weight:normal;">München</span>
<span class="t" style="left:1461.62px;top:793.15px;font-size:14px;line-height:14px;color:#1a1a1a;font-weight:normal;">42.87K</span>
<span class="t" style="left:1613.61px;top:793.15px;font-size:14px;line-height:14px;color:#1a1a1a;font-weight:normal;">40.3K</span>
<span class="t" style="left:1720.05px;top:793.15px;font-size:14px;line-height:14px;color:#1a1a1a;font-weight:normal;">50.10</span>
<span class="t" style="left:1837.25px;top:793.15px;font-size:14px;line-height:14px;color:#1a1a1a;font-weight:normal;">49.10</span>
<span class="t" style="left:1232.00px;top:835.15px;font-size:14px;line-height:14px;color:#1a1a1a;font-weight:normal;">Bielefeld</span>
<span class="t" style="left:1461.62px;top:835.15px;font-size:14px;line-height:14px;color:#1a1a1a;font-weight:normal;">20.34K</span>
<span class="t" style="left:1613.61px;top:835.15px;font-size:14px;line-height:14px;color:#1a1a1a;font-weight:normal;">19.1K</span>
<span class="t" style="left:1720.05px;top:835.15px;font-size:14px;line-height:14px;color:#1a1a1a;font-weight:normal;">50.05</span>
<span class="t" style="left:1837.25px;top:835.15px;font-size:14px;line-height:14px;color:#1a1a1a;font-weight:normal;">49.05</span>
<span class="t" style="left:1232.00px;top:877.15px;font-size:14px;line-height:14px;color:#fff;font-weight:bold;">Grand Total</span>
<span class="t" style="left:1453.06px;top:877.15px;font-size:14px;line-height:14px;color:#fff;font-weight:bold;">176.17K</span>
<span class="t" style="left:1605.04px;top:877.15px;font-size:14px;line-height:14px;color:#fff;font-weight:bold;">165.4K</span>
<span class="t" style="left:1720.05px;top:877.15px;font-size:14px;line-height:14px;color:#fff;font-weight:bold;">50.02</span>
<span class="t" style="left:1837.25px;top:877.15px;font-size:14px;line-height:14px;color:#fff;font-weight:bold;">49.02</span>
</body></html>
